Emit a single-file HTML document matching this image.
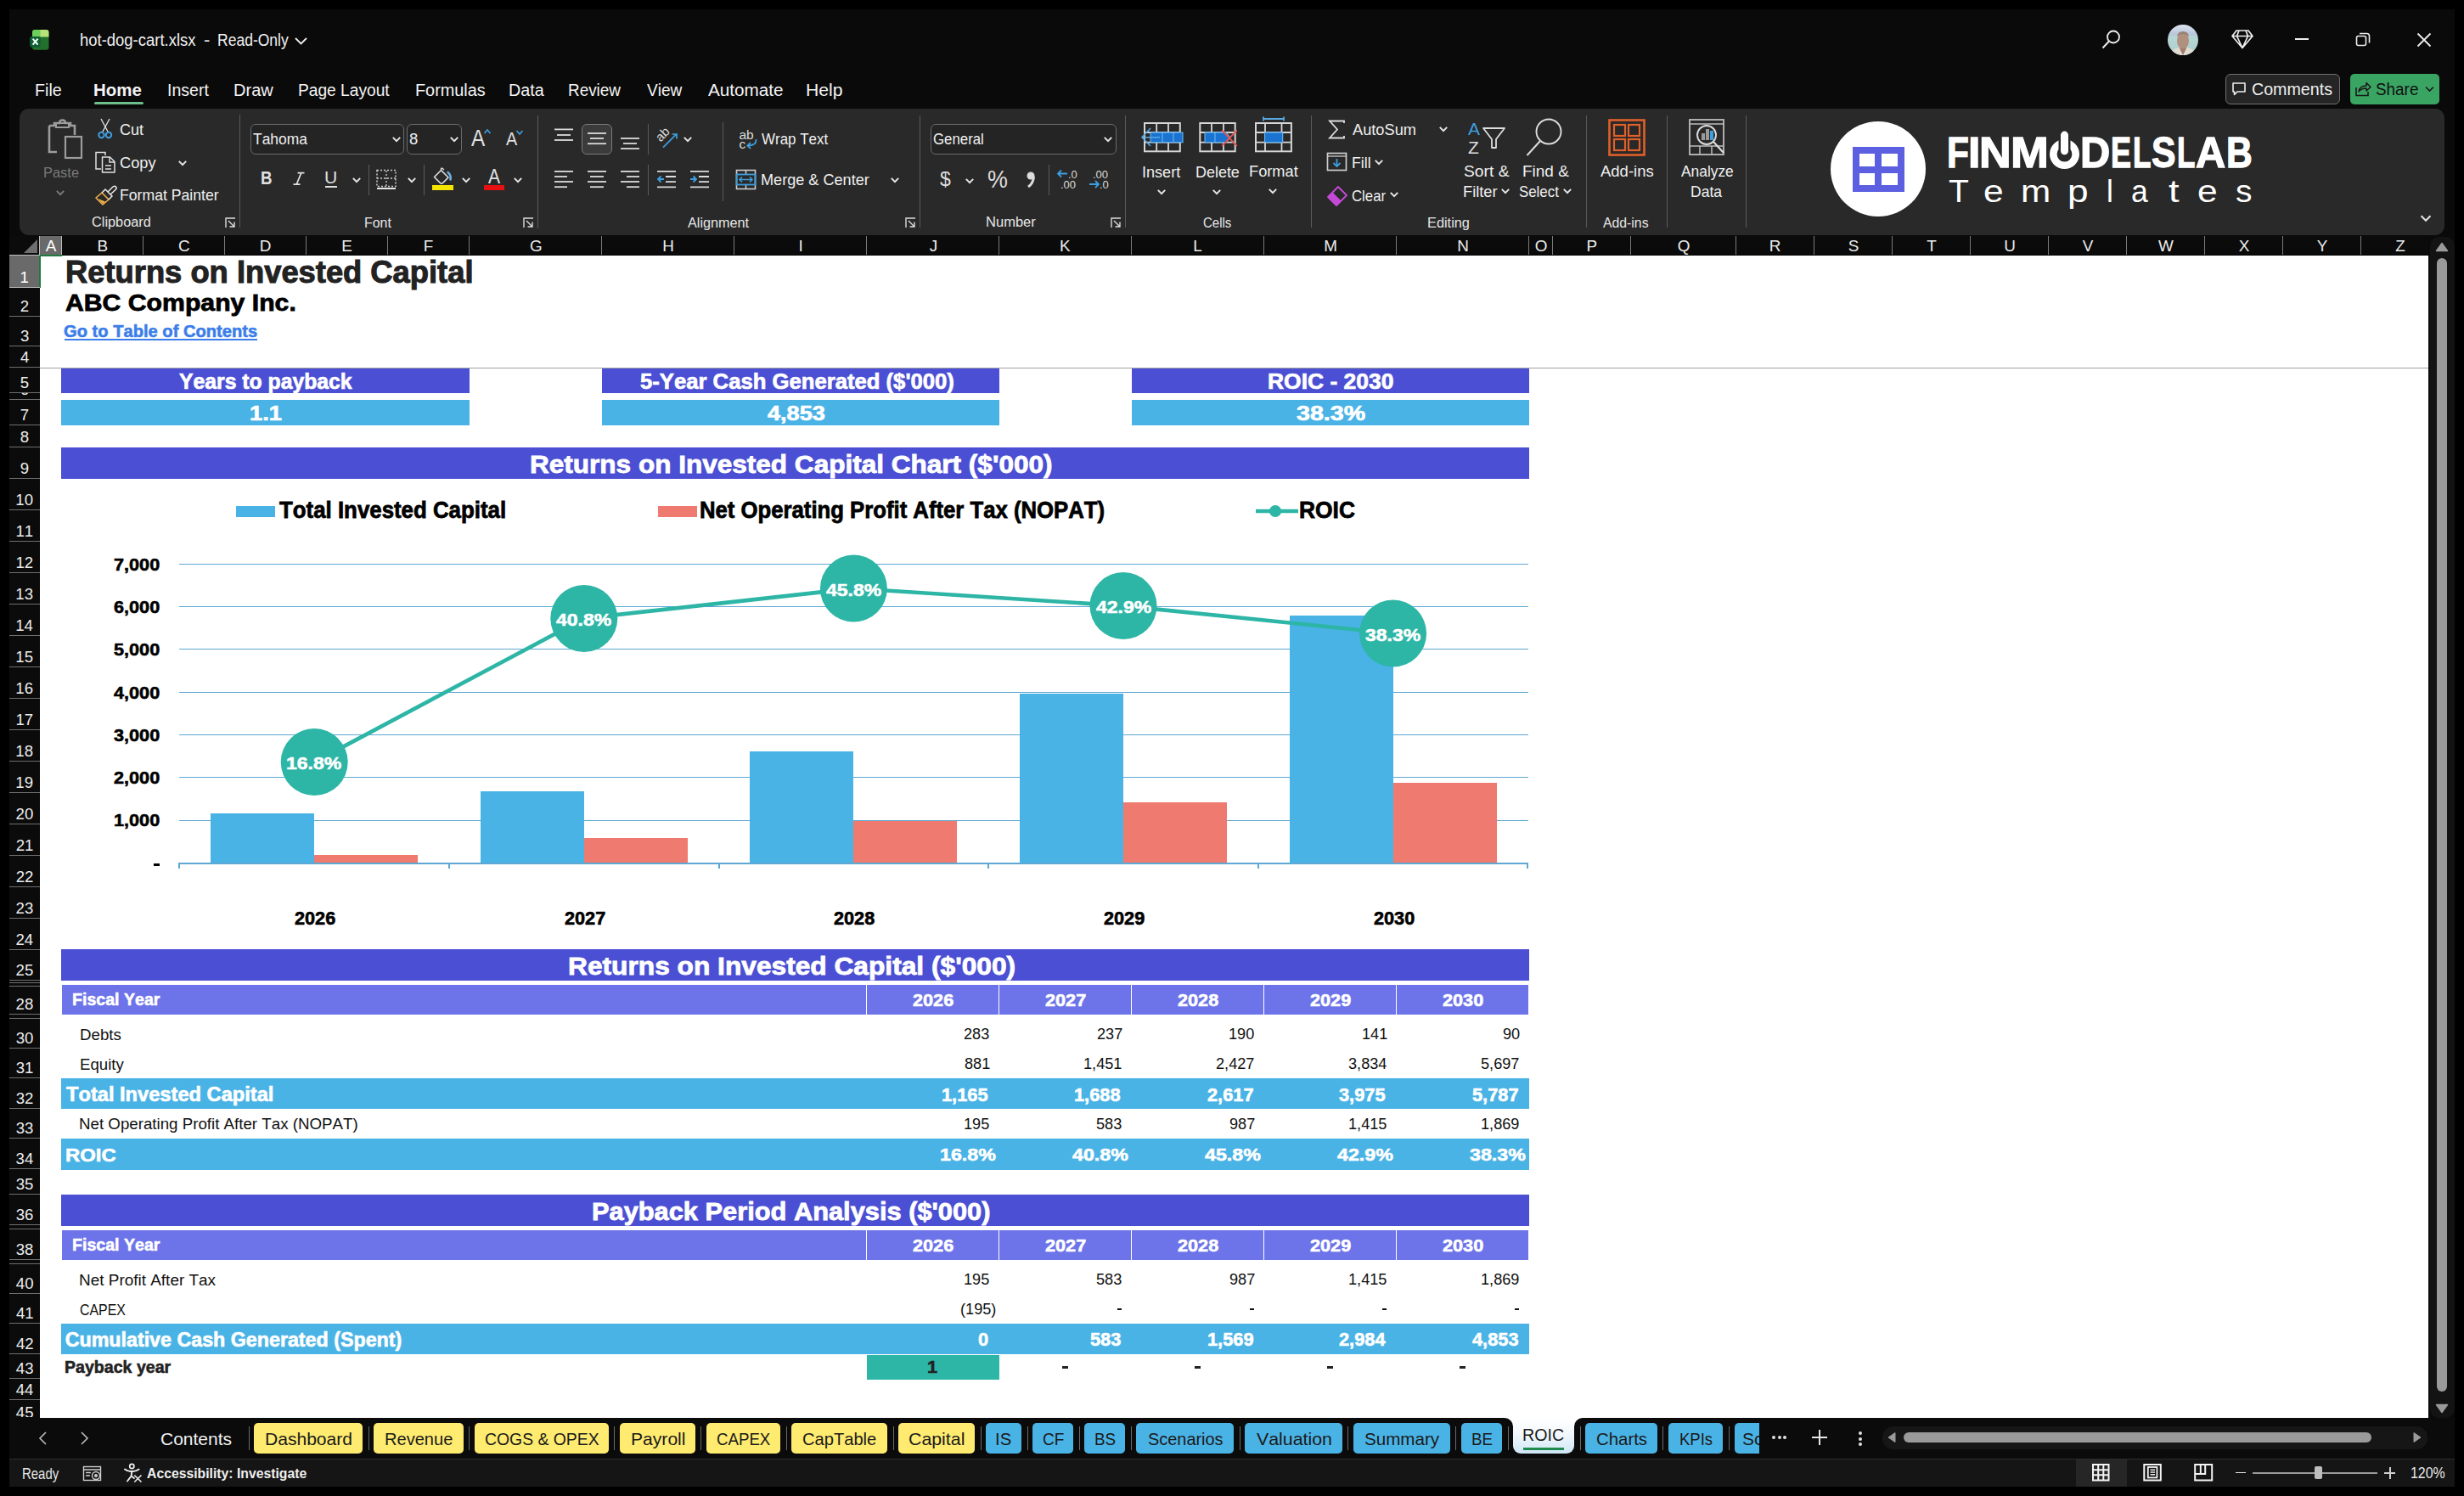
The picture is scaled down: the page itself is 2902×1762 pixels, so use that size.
<!DOCTYPE html><html><head><meta charset="utf-8"><style>
html,body{margin:0;padding:0;width:2902px;height:1762px;overflow:hidden;background:#000;}
.r{position:absolute;}
.t{position:absolute;white-space:nowrap;line-height:1;transform-origin:0 0;font-kerning:none;font-family:"Liberation Sans",sans-serif;}
svg{overflow:visible}
</style></head><body>
<div class="r" style="left:11px;top:11px;width:2880px;height:1740px;background:#0a0a0a;"></div>
<svg class="r" style="left:34px;top:34px;" width="26" height="26" viewBox="0 0 26 26"><defs><clipPath id="xl"><rect x="4" y="1" width="19.5" height="23.8" rx="3"/></clipPath></defs><g clip-path="url(#xl)"><rect x="4" y="1" width="20" height="24" fill="#22702b"/><rect x="4" y="1" width="9.2" height="8.5" fill="#6ccf5b"/><rect x="13.2" y="1" width="11" height="8.5" fill="#b8e57a"/></g><rect x="1.2" y="8.9" width="12.5" height="12.8" rx="2" fill="#0f5e36"/><path d="M4.6 11.6 L10.6 18.6 M10.6 11.6 L4.6 18.6" stroke="#f2fff4" stroke-width="2.1"/></svg>
<div class="t" style="left:93.72px;top:38.29px;font-size:19.77px;font-weight:400;color:#f2f2f2;transform:scaleX(0.9341);">hot-dog-cart.xlsx</div>
<div class="t" style="left:240.02px;top:38.29px;font-size:19.77px;font-weight:400;color:#f2f2f2;transform:scaleX(1.1189);">-</div>
<div class="t" style="left:255.96px;top:38.29px;font-size:19.77px;font-weight:400;color:#f2f2f2;transform:scaleX(0.8866);">Read-Only</div>
<svg class="r" style="left:346px;top:42px;" width="18" height="12" viewBox="0 0 18 12"><path d="M2 3 L8.5 9.5 L15 3" stroke="#eee" stroke-width="1.8" fill="none"/></svg>
<svg class="r" style="left:2474px;top:34px;" width="26" height="26" viewBox="0 0 26 26"><circle cx="15" cy="9.5" r="7" stroke="#eee" stroke-width="1.8" fill="none"/><path d="M10 14.5 L2.5 22.5" stroke="#eee" stroke-width="1.9"/></svg>
<svg class="r" style="left:2553px;top:29px;" width="36" height="36" viewBox="0 0 36 36"><defs><clipPath id="av"><circle cx="18" cy="18" r="18"/></clipPath><linearGradient id="avg" x1="0" y1="0" x2="0" y2="1"><stop offset="0" stop-color="#dfe4f0"/><stop offset="0.3" stop-color="#b9c6dc"/><stop offset="0.42" stop-color="#b7d6d6"/><stop offset="1" stop-color="#a9cfcc"/></linearGradient></defs><g clip-path="url(#av)"><rect width="36" height="36" fill="url(#avg)"/><ellipse cx="18" cy="19" rx="7" ry="10" fill="#b0907f"/><path d="M11 14 Q11.5 8 18 8 Q24.5 8 25 14 Q22 11 18 11 Q14 11 11 14Z" fill="#9a8276"/><path d="M3 36 Q5 28 13 27 L18 30 L23 27 Q31 28 33 36Z" fill="#e2dbd2"/><path d="M13.5 27 L18 36 L22.5 27 Q18 29.5 13.5 27Z" fill="#a07c6c"/></g></svg>
<svg class="r" style="left:2627px;top:33px;" width="28" height="26" viewBox="0 0 28 26"><path d="M7 3 H21 L26 9.5 L14 23.5 L2 9.5 Z M2 9.5 H26 M10 3 L7.5 9.5 L14 23.5 L20.5 9.5 L18 3" stroke="#eee" stroke-width="1.7" fill="none" stroke-linejoin="round"/></svg>
<div class="r" style="left:2703px;top:45px;width:16px;height:2px;background:#eee;"></div>
<svg class="r" style="left:2773px;top:37px;" width="20" height="20" viewBox="0 0 20 20"><rect x="2.5" y="5.5" width="11" height="11" rx="2" stroke="#eee" stroke-width="1.6" fill="none"/><path d="M6 2.5 H14.5 Q17.5 2.5 17.5 5.5 V13.5" stroke="#eee" stroke-width="1.6" fill="none"/></svg>
<svg class="r" style="left:2845px;top:37px;" width="20" height="20" viewBox="0 0 20 20"><path d="M2.5 2.5 L17.5 17.5 M17.5 2.5 L2.5 17.5" stroke="#eee" stroke-width="1.8"/></svg>
<div class="r" style="left:2621px;top:87px;width:133px;height:34px;border:1px solid #707070;border-radius:6px;background:#252525"></div>
<svg class="r" style="left:2628px;top:96px;" width="18" height="18" viewBox="0 0 18 18"><path d="M2 2 H16 V12 H7 L3.5 15.5 V12 H2 Z" stroke="#eee" stroke-width="1.6" fill="none" stroke-linejoin="round"/></svg>
<div class="t" style="left:2651.70px;top:96.37px;font-size:19.91px;font-weight:400;color:#f0f0f0;transform:scaleX(0.9869);">Comments</div>
<div class="r" style="left:2768px;top:87px;width:105px;height:36px;border-radius:5px;background:#3aa563"></div>
<svg class="r" style="left:2773px;top:95px;" width="20" height="20" viewBox="0 0 20 20"><path d="M2 8 V17.5 H16 V13" stroke="#1a1a1a" stroke-width="1.6" fill="none"/><path d="M5 13 Q6 6 14 6 V2.5 L19 7.5 L14 12 V9 Q8 9 5 13 Z" stroke="#1a1a1a" stroke-width="1.5" fill="none" stroke-linejoin="round"/></svg>
<div class="t" style="left:2798.14px;top:96.37px;font-size:19.91px;font-weight:400;color:#111;transform:scaleX(0.9484);">Share</div>
<svg class="r" style="left:2855px;top:100px;" width="14" height="10" viewBox="0 0 14 10"><path d="M2 2.5 L6.5 7 L11 2.5" stroke="#1a1a1a" stroke-width="1.6" fill="none"/></svg>
<div class="t" style="left:41.19px;top:97.17px;font-size:19.91px;font-weight:400;color:#f4f4f4;transform:scaleX(0.9876);">File</div>
<div class="t" style="left:110.23px;top:97.17px;font-size:19.91px;font-weight:700;color:#f4f4f4;transform:scaleX(1.0279);">Home</div>
<div class="t" style="left:196.80px;top:97.17px;font-size:19.91px;font-weight:400;color:#f4f4f4;transform:scaleX(0.9808);">Insert</div>
<div class="t" style="left:275.35px;top:97.17px;font-size:19.91px;font-weight:400;color:#f4f4f4;transform:scaleX(1.0071);">Draw</div>
<div class="t" style="left:351.43px;top:97.17px;font-size:19.91px;font-weight:400;color:#f4f4f4;transform:scaleX(0.9632);">Page Layout</div>
<div class="t" style="left:488.97px;top:97.17px;font-size:19.91px;font-weight:400;color:#f4f4f4;transform:scaleX(0.9971);">Formulas</div>
<div class="t" style="left:599.38px;top:97.17px;font-size:19.91px;font-weight:400;color:#f4f4f4;transform:scaleX(0.9894);">Data</div>
<div class="t" style="left:669.45px;top:97.17px;font-size:19.91px;font-weight:400;color:#f4f4f4;transform:scaleX(0.9497);">Review</div>
<div class="t" style="left:761.92px;top:97.17px;font-size:19.91px;font-weight:400;color:#f4f4f4;transform:scaleX(0.9578);">View</div>
<div class="t" style="left:833.66px;top:97.17px;font-size:19.91px;font-weight:400;color:#f4f4f4;transform:scaleX(1.0402);">Automate</div>
<div class="t" style="left:948.86px;top:97.17px;font-size:19.91px;font-weight:400;color:#f4f4f4;transform:scaleX(1.0628);">Help</div>
<div class="r" style="left:111px;top:120px;width:58px;height:3px;border-radius:2px;background:#6cbf8a"></div>
<div class="r" style="left:23px;top:128px;width:2856px;height:149px;border-radius:11px;background:#292929"></div>
<svg class="r" style="left:54px;top:140px;" width="44" height="48" viewBox="0 0 44 48"><path d="M4 8 H10 V5 H16 Q16 1.5 19.5 1.5 Q23 1.5 23 5 H29 V8 H34 V19" stroke="#9c9c9c" stroke-width="2.6" fill="none"/><path d="M4 8 V39 H13" stroke="#9c9c9c" stroke-width="2.6" fill="none"/><rect x="12" y="5" width="15" height="5" fill="none" stroke="#9c9c9c" stroke-width="2"/><rect x="23" y="21" width="19" height="25" fill="none" stroke="#9c9c9c" stroke-width="2.2"/></svg>
<div class="t" style="left:50.65px;top:195.84px;font-size:16.72px;font-weight:400;color:#7a7a7a;transform:scaleX(0.9845);">Paste</div>
<svg class="r" style="left:64px;top:222px;" width="14" height="10" viewBox="0 0 14 10"><path d="M2.8 2.9 L7 7.1 L11.2 2.9" stroke="#7a7a7a" stroke-width="2.0" fill="none"/></svg>
<svg class="r" style="left:114px;top:139px;" width="20" height="26" viewBox="0 0 20 26"><path d="M5 1 L13 16 M15 1 L7 16" stroke="#e8e8e8" stroke-width="1.3" fill="none"/><circle cx="5.5" cy="20" r="3.2" stroke="#3f9ede" stroke-width="2" fill="none"/><circle cx="14" cy="20" r="3.2" stroke="#3f9ede" stroke-width="2" fill="none"/></svg>
<div class="t" style="left:141.08px;top:144.03px;font-size:18.17px;font-weight:400;color:#f0f0f0;transform:scaleX(0.9920);">Cut</div>
<svg class="r" style="left:111px;top:178px;" width="27" height="27" viewBox="0 0 27 27"><path d="M13 5 V1.5 H2 V21 H8" stroke="#e0e0e0" stroke-width="1.5" fill="none"/><path d="M9.5 7 H18.5 L24 12.5 V25 H9.5 Z" stroke="#e0e0e0" stroke-width="1.5" fill="none" stroke-linejoin="round"/><path d="M18 7 V13 H24" stroke="#e0e0e0" stroke-width="1.4" fill="none"/><path d="M13 17 H20 M13 21 H20" stroke="#e0e0e0" stroke-width="1.4"/></svg>
<div class="t" style="left:141.07px;top:182.63px;font-size:18.17px;font-weight:400;color:#f0f0f0;transform:scaleX(1.0059);">Copy</div>
<svg class="r" style="left:208px;top:186.6px;" width="14" height="10" viewBox="0 0 14 10"><path d="M2.8 2.9 L7 7.1 L11.2 2.9" stroke="#e6e6e6" stroke-width="2.0" fill="none"/></svg>
<svg class="r" style="left:111px;top:217px;" width="27" height="26" viewBox="0 0 27 26"><path d="M2 16 L9 10 L17 18 L10 24 Z" stroke="#f0b24b" stroke-width="1.6" fill="none" stroke-linejoin="round"/><path d="M4.5 17 L10 23 L13 20.5 Z" fill="#f0b24b"/><path d="M9 10 L13 6 L21 14 L17 18" stroke="#e8e8e8" stroke-width="1.5" fill="none"/><path d="M16 9 L22 3 Q24 1.5 25.5 3 Q27 4.5 25 6.5 L19 12" stroke="#e8e8e8" stroke-width="1.5" fill="none"/></svg>
<div class="t" style="left:140.55px;top:221.33px;font-size:18.17px;font-weight:400;color:#f0f0f0;transform:scaleX(0.9716);">Format Painter</div>
<div class="t" style="left:108.17px;top:254.47px;font-size:15.84px;font-weight:400;color:#e6e6e6;transform:scaleX(1.0305);">Clipboard</div>
<svg class="r" style="left:265px;top:256px;" width="13" height="13" viewBox="0 0 13 13"><path d="M1 12 V1 H12" stroke="#ddd" stroke-width="1.4" fill="none"/><path d="M4 4 L11 11 M11 5.5 V11 H5.5" stroke="#ddd" stroke-width="1.4" fill="none"/></svg>
<div class="r" style="left:282px;top:135px;width:1px;height:133px;background:#5a5a5a;"></div>
<div class="r" style="left:295px;top:146px;width:179px;height:34px;border:1px solid #6a6a6a;border-radius:6px;background:#242424"></div>
<div class="t" style="left:297.91px;top:155.12px;font-size:18.90px;font-weight:400;color:#f0f0f0;transform:scaleX(0.9217);">Tahoma</div>
<svg class="r" style="left:460px;top:159px;" width="14" height="10" viewBox="0 0 14 10"><path d="M2.8 2.9 L7 7.1 L11.2 2.9" stroke="#e6e6e6" stroke-width="2.0" fill="none"/></svg>
<div class="r" style="left:479px;top:146px;width:63px;height:34px;border:1px solid #6a6a6a;border-radius:6px;background:#242424"></div>
<div class="t" style="left:481.59px;top:155.35px;font-size:18.62px;font-weight:400;color:#f0f0f0;transform:scaleX(0.9955);">8</div>
<svg class="r" style="left:528px;top:159px;" width="14" height="10" viewBox="0 0 14 10"><path d="M2.8 2.9 L7 7.1 L11.2 2.9" stroke="#e6e6e6" stroke-width="2.0" fill="none"/></svg>
<div class="t" style="left:554.65px;top:148.54px;font-size:27.62px;font-weight:400;color:#e0e0e0;transform:scaleX(0.8792);">A</div>
<svg class="r" style="left:569px;top:151px;" width="10" height="8" viewBox="0 0 10 8"><path d="M1.5 6 L5 2 L8.5 6" stroke="#3f9ede" stroke-width="1.7" fill="none"/></svg>
<div class="t" style="left:595.56px;top:153.03px;font-size:22.24px;font-weight:400;color:#e0e0e0;transform:scaleX(0.8884);">A</div>
<svg class="r" style="left:607px;top:152px;" width="10" height="8" viewBox="0 0 10 8"><path d="M1.5 2 L5 6 L8.5 2" stroke="#3f9ede" stroke-width="1.7" fill="none"/></svg>
<div class="t" style="left:306.55px;top:199.86px;font-size:21.37px;font-weight:700;color:#e0e0e0;transform:scaleX(0.8749);">B</div>
<svg class="r" style="left:344px;top:201px;" width="16" height="19" viewBox="0 0 16 19"><path d="M6.5 2.6 H14.5 M1.5 16.2 H9.5 M10.8 2.6 L5.2 16.2" stroke="#e0e0e0" stroke-width="1.7" fill="none"/></svg>
<div class="t" style="left:382.37px;top:200.12px;font-size:19.62px;font-weight:400;color:#e0e0e0;transform:scaleX(1.0769);">U</div>
<div class="r" style="left:383px;top:219px;width:14px;height:2px;background:#e0e0e0;"></div>
<svg class="r" style="left:412.5px;top:206.8px;" width="14" height="10" viewBox="0 0 14 10"><path d="M2.8 2.9 L7 7.1 L11.2 2.9" stroke="#e6e6e6" stroke-width="2.0" fill="none"/></svg>
<div class="r" style="left:434px;top:194px;width:1px;height:36px;background:#5a5a5a;"></div>
<svg class="r" style="left:442px;top:199px;" width="26" height="25" viewBox="0 0 26 25"><rect x="2" y="1.5" width="22" height="19" fill="none" stroke="#cfcfcf" stroke-width="1.5" stroke-dasharray="2 2"/><path d="M13 2 V20 M2 11 H24" stroke="#cfcfcf" stroke-width="1.3" stroke-dasharray="2 2"/><path d="M2 23 H24" stroke="#e6e6e6" stroke-width="2"/></svg>
<svg class="r" style="left:477.6px;top:206.8px;" width="14" height="10" viewBox="0 0 14 10"><path d="M2.8 2.9 L7 7.1 L11.2 2.9" stroke="#e6e6e6" stroke-width="2.0" fill="none"/></svg>
<div class="r" style="left:499px;top:194px;width:1px;height:36px;background:#5a5a5a;"></div>
<svg class="r" style="left:507px;top:197px;" width="30" height="24" viewBox="0 0 30 24"><path d="M4.5 11.5 L12.5 3.5 L21 12 L14.5 18.5 Q13 20 11.5 18.5 Z" stroke="#e0e0e0" stroke-width="1.6" fill="none" stroke-linejoin="round"/><path d="M12.5 3.5 V1.8 Q12.5 0.8 13.8 1.2 L16 3" stroke="#e0e0e0" stroke-width="1.4" fill="none"/><path d="M20.5 6 Q24.5 9 23.5 14.5" stroke="#6ab0e8" stroke-width="2.6" fill="none" stroke-linecap="round"/></svg>
<div class="r" style="left:509px;top:218px;width:25px;height:6px;background:#f5e400;"></div>
<svg class="r" style="left:541.8px;top:206.8px;" width="14" height="10" viewBox="0 0 14 10"><path d="M2.8 2.9 L7 7.1 L11.2 2.9" stroke="#e6e6e6" stroke-width="2.0" fill="none"/></svg>
<div class="t" style="left:574.96px;top:196.37px;font-size:24.71px;font-weight:400;color:#e0e0e0;transform:scaleX(0.8545);">A</div>
<div class="r" style="left:570px;top:218px;width:24px;height:6px;background:#e81010;"></div>
<svg class="r" style="left:603px;top:206.8px;" width="14" height="10" viewBox="0 0 14 10"><path d="M2.8 2.9 L7 7.1 L11.2 2.9" stroke="#e6e6e6" stroke-width="2.0" fill="none"/></svg>
<div class="t" style="left:429.19px;top:254.77px;font-size:15.84px;font-weight:400;color:#e6e6e6;transform:scaleX(1.0071);">Font</div>
<svg class="r" style="left:616px;top:256px;" width="13" height="13" viewBox="0 0 13 13"><path d="M1 12 V1 H12" stroke="#ddd" stroke-width="1.4" fill="none"/><path d="M4 4 L11 11 M11 5.5 V11 H5.5" stroke="#ddd" stroke-width="1.4" fill="none"/></svg>
<div class="r" style="left:633px;top:136px;width:1px;height:133px;background:#5a5a5a;"></div>
<svg class="r" style="left:653px;top:0px;" width="30" height="300" viewBox="0 0 30 300"><path d="M0 152.4 H22" stroke="#dcdcdc" stroke-width="1.8"/><path d="M3 159 H19" stroke="#dcdcdc" stroke-width="1.8"/><path d="M0 165 H22" stroke="#dcdcdc" stroke-width="1.8"/></svg>
<div class="r" style="left:685px;top:146px;width:34px;height:34px;border:1px solid #7a7a7a;border-radius:6px;background:#3b3b3b"></div>
<svg class="r" style="left:692px;top:0px;" width="30" height="300" viewBox="0 0 30 300"><path d="M0 157 H22" stroke="#dcdcdc" stroke-width="1.8"/><path d="M3 163 H19" stroke="#dcdcdc" stroke-width="1.8"/><path d="M0 169.2 H22" stroke="#dcdcdc" stroke-width="1.8"/></svg>
<svg class="r" style="left:731px;top:0px;" width="30" height="300" viewBox="0 0 30 300"><path d="M0 163 H22" stroke="#dcdcdc" stroke-width="1.8"/><path d="M3 169 H19" stroke="#dcdcdc" stroke-width="1.8"/><path d="M0 175 H22" stroke="#dcdcdc" stroke-width="1.8"/></svg>
<div class="r" style="left:763px;top:146px;width:1px;height:36px;background:#5a5a5a;"></div>
<svg class="r" style="left:768px;top:146px;" width="34" height="34" viewBox="0 0 34 34"><text x="13" y="13" text-anchor="middle" dominant-baseline="middle" transform="rotate(-45 13 13)" font-family="Liberation Sans" font-size="15" fill="#dcdcdc">ab</text><path d="M13 27.7 L28.5 12.2 M23.5 12 H29 V17.5" stroke="#3f9ede" stroke-width="1.7" fill="none"/></svg>
<svg class="r" style="left:803px;top:159px;" width="14" height="10" viewBox="0 0 14 10"><path d="M2.8 2.9 L7 7.1 L11.2 2.9" stroke="#e6e6e6" stroke-width="2.0" fill="none"/></svg>
<div class="r" style="left:851px;top:144px;width:1px;height:93px;background:#5a5a5a;"></div>
<svg class="r" style="left:868px;top:148px;" width="28" height="30" viewBox="0 0 28 30"><text x="2.5" y="15.5" font-family="Liberation Sans" font-size="15.5" fill="#dcdcdc">ab</text><text x="2.5" y="27" font-family="Liberation Sans" font-size="15.5" fill="#dcdcdc">c</text><path d="M22.5 16 Q23 23 14 23.5 H12.5 M16 20 L12.3 23.5 L16 27" stroke="#3f9ede" stroke-width="1.8" fill="none"/></svg>
<div class="t" style="left:896.93px;top:155.22px;font-size:18.90px;font-weight:400;color:#f0f0f0;transform:scaleX(0.8974);">Wrap Text</div>
<svg class="r" style="left:653px;top:0px;" width="30" height="300" viewBox="0 0 30 300"><path d="M0 201.9 H22" stroke="#dcdcdc" stroke-width="1.8"/><path d="M0 208 H15" stroke="#dcdcdc" stroke-width="1.8"/><path d="M0 214 H22" stroke="#dcdcdc" stroke-width="1.8"/><path d="M0 220.2 H15" stroke="#dcdcdc" stroke-width="1.8"/></svg>
<svg class="r" style="left:692px;top:0px;" width="30" height="300" viewBox="0 0 30 300"><path d="M0 201.9 H22" stroke="#dcdcdc" stroke-width="1.8"/><path d="M3 208 H19" stroke="#dcdcdc" stroke-width="1.8"/><path d="M0 214 H22" stroke="#dcdcdc" stroke-width="1.8"/><path d="M3 220.2 H19" stroke="#dcdcdc" stroke-width="1.8"/></svg>
<svg class="r" style="left:731px;top:0px;" width="30" height="300" viewBox="0 0 30 300"><path d="M0 201.9 H22" stroke="#dcdcdc" stroke-width="1.8"/><path d="M7 208 H22" stroke="#dcdcdc" stroke-width="1.8"/><path d="M0 214 H22" stroke="#dcdcdc" stroke-width="1.8"/><path d="M7 220.2 H22" stroke="#dcdcdc" stroke-width="1.8"/></svg>
<div class="r" style="left:763px;top:194px;width:1px;height:36px;background:#5a5a5a;"></div>
<svg class="r" style="left:772px;top:198px;" width="26" height="26" viewBox="0 0 26 26"><path d="M2 3.9 H24 M12 10 H24 M12 16.2 H24 M2 22.3 H24" stroke="#dcdcdc" stroke-width="1.8"/><path d="M10 13 H3 M6.5 9.5 L3 13 L6.5 16.5" stroke="#3f9ede" stroke-width="1.8" fill="none"/></svg>
<svg class="r" style="left:811px;top:198px;" width="26" height="26" viewBox="0 0 26 26"><path d="M2 3.9 H24 M12 10 H24 M12 16.2 H24 M2 22.3 H24" stroke="#dcdcdc" stroke-width="1.8"/><path d="M2 13 H9 M5.5 9.5 L9 13 L5.5 16.5" stroke="#3f9ede" stroke-width="1.8" fill="none"/></svg>
<svg class="r" style="left:866px;top:199px;" width="26" height="26" viewBox="0 0 26 26"><rect x="1.5" y="1.5" width="22" height="22" fill="none" stroke="#cfcfcf" stroke-width="1.6"/><path d="M12.5 1.5 V6 M12.5 19 V23.5" stroke="#cfcfcf" stroke-width="1.5"/><rect x="1.5" y="6.5" width="22" height="12" fill="none" stroke="#3f9ede" stroke-width="1.8"/><path d="M5 12.5 H20 M8 9.5 L5 12.5 L8 15.5 M17 9.5 L20 12.5 L17 15.5" stroke="#3f9ede" stroke-width="1.6" fill="none"/></svg>
<div class="t" style="left:895.51px;top:202.92px;font-size:18.90px;font-weight:400;color:#f0f0f0;transform:scaleX(0.9581);">Merge &amp; Center</div>
<svg class="r" style="left:1046.7px;top:207px;" width="14" height="10" viewBox="0 0 14 10"><path d="M2.8 2.9 L7 7.1 L11.2 2.9" stroke="#e6e6e6" stroke-width="2.0" fill="none"/></svg>
<div class="t" style="left:809.97px;top:254.77px;font-size:15.84px;font-weight:400;color:#e6e6e6;transform:scaleX(1.0241);">Alignment</div>
<svg class="r" style="left:1066px;top:256px;" width="13" height="13" viewBox="0 0 13 13"><path d="M1 12 V1 H12" stroke="#ddd" stroke-width="1.4" fill="none"/><path d="M4 4 L11 11 M11 5.5 V11 H5.5" stroke="#ddd" stroke-width="1.4" fill="none"/></svg>
<div class="r" style="left:1083px;top:136px;width:1px;height:132px;background:#5a5a5a;"></div>
<div class="r" style="left:1096px;top:146px;width:217px;height:34px;border:1px solid #6a6a6a;border-radius:6px;background:#242424"></div>
<div class="t" style="left:1098.65px;top:155.22px;font-size:18.90px;font-weight:400;color:#f0f0f0;transform:scaleX(0.8907);">General</div>
<svg class="r" style="left:1298px;top:159px;" width="14" height="10" viewBox="0 0 14 10"><path d="M2.8 2.9 L7 7.1 L11.2 2.9" stroke="#e6e6e6" stroke-width="2.0" fill="none"/></svg>
<div class="t" style="left:1106.55px;top:199.58px;font-size:23.26px;font-weight:400;color:#dcdcdc;transform:scaleX(0.9911);">$</div>
<svg class="r" style="left:1135px;top:207.5px;" width="14" height="10" viewBox="0 0 14 10"><path d="M2.8 2.9 L7 7.1 L11.2 2.9" stroke="#e6e6e6" stroke-width="2.0" fill="none"/></svg>
<div class="t" style="left:1163.04px;top:197.23px;font-size:29.07px;font-weight:400;color:#dcdcdc;transform:scaleX(0.9253);">%</div>
<svg class="r" style="left:1206px;top:201px;" width="16" height="22" viewBox="0 0 16 22"><circle cx="8" cy="6" r="4.5" fill="#dcdcdc"/><path d="M11.5 7 Q11 15 5 19" stroke="#dcdcdc" stroke-width="3" fill="none"/></svg>
<div class="r" style="left:1235px;top:194px;width:1px;height:36px;background:#5a5a5a;"></div>
<svg class="r" style="left:1243px;top:198px;" width="28" height="26" viewBox="0 0 28 26"><path d="M14 6.5 H3 M7 2.5 L3 6.5 L7 10.5" stroke="#3f9ede" stroke-width="1.8" fill="none"/><text x="15" y="12" font-family="Liberation Sans" font-size="13" fill="#dcdcdc">.0</text><text x="6" y="24" font-family="Liberation Sans" font-size="13" fill="#dcdcdc">.00</text></svg>
<svg class="r" style="left:1281px;top:198px;" width="28" height="26" viewBox="0 0 28 26"><text x="6" y="12" font-family="Liberation Sans" font-size="13" fill="#dcdcdc">.00</text><path d="M2 19 H13 M9 15 L13 19 L9 23" stroke="#3f9ede" stroke-width="1.8" fill="none"/><text x="14" y="24" font-family="Liberation Sans" font-size="13" fill="#dcdcdc">.0</text></svg>
<div class="t" style="left:1161.44px;top:254.07px;font-size:15.84px;font-weight:400;color:#e6e6e6;transform:scaleX(1.0441);">Number</div>
<svg class="r" style="left:1307.7px;top:256px;" width="13" height="13" viewBox="0 0 13 13"><path d="M1 12 V1 H12" stroke="#ddd" stroke-width="1.4" fill="none"/><path d="M4 4 L11 11 M11 5.5 V11 H5.5" stroke="#ddd" stroke-width="1.4" fill="none"/></svg>
<div class="r" style="left:1325px;top:136px;width:1px;height:132px;background:#5a5a5a;"></div>
<svg class="r" style="left:1340px;top:136px;" width="56" height="46" viewBox="0 0 56 46"><rect x="8" y="9" width="41.8" height="33.3" fill="none" stroke="#d6d6d6" stroke-width="2"/><path d="M22.2 9 V42.3 M36 9 V42.3 M8 20 H49.8 M8 31.7 H49.8" stroke="#d6d6d6" stroke-width="1.8"/><rect x="15" y="20" width="38" height="11.7" fill="#1a73d0" stroke="#6ab8f0" stroke-width="1.1"/><path d="M29 20 V31.7 M42 20 V31.7" stroke="#6ab8f0" stroke-width="1.1"/><path d="M5 25.8 H26 M15 15 L5 25.8 L15 36" stroke="#5aa8e0" stroke-width="1.6" fill="none"/></svg>
<div class="t" style="left:1345.33px;top:194.43px;font-size:18.17px;font-weight:400;color:#f0f0f0;transform:scaleX(0.9947);">Insert</div>
<svg class="r" style="left:1361px;top:221px;" width="14" height="10" viewBox="0 0 14 10"><path d="M2.8 2.9 L7 7.1 L11.2 2.9" stroke="#e6e6e6" stroke-width="2.0" fill="none"/></svg>
<svg class="r" style="left:1405px;top:136px;" width="56" height="46" viewBox="0 0 56 46"><rect x="8.3" y="9" width="41.400000000000006" height="33.3" fill="none" stroke="#d6d6d6" stroke-width="2"/><path d="M22 9 V42.3 M36 9 V42.3 M8.3 20 H49.7 M8.3 31.7 H49.7" stroke="#d6d6d6" stroke-width="1.8"/><path d="M14 20 H38.8 L44 25.8 L38.8 31.7 H14 Z" fill="#1a73d0" stroke="#6ab8f0" stroke-width="1.1"/><path d="M26 20 V31.7" stroke="#6ab8f0" stroke-width="1.1"/><path d="M34.3 17.5 L51.8 35.8 M51.8 17.5 L34.3 35.8" stroke="#e05555" stroke-width="1.9"/></svg>
<div class="t" style="left:1407.53px;top:194.43px;font-size:18.17px;font-weight:400;color:#f0f0f0;transform:scaleX(0.9876);">Delete</div>
<svg class="r" style="left:1426px;top:221px;" width="14" height="10" viewBox="0 0 14 10"><path d="M2.8 2.9 L7 7.1 L11.2 2.9" stroke="#e6e6e6" stroke-width="2.0" fill="none"/></svg>
<svg class="r" style="left:1475px;top:136px;" width="50" height="46" viewBox="0 0 50 46"><rect x="4" y="9" width="41.9" height="33.3" fill="none" stroke="#d6d6d6" stroke-width="2"/><path d="M15 9 V42.3 M34.5 9 V42.3 M4 20 H45.9 M4 31.7 H45.9" stroke="#d6d6d6" stroke-width="1.8"/><rect x="14.6" y="20" width="21.1" height="11.7" fill="#1a73d0" stroke="#6ab8f0" stroke-width="1.1"/><path d="M13 4 H37 M13 1.5 V6.5 M37 1.5 V6.5" stroke="#5aa8e0" stroke-width="1.8"/></svg>
<div class="t" style="left:1471.00px;top:192.83px;font-size:18.17px;font-weight:400;color:#f0f0f0;transform:scaleX(1.0051);">Format</div>
<svg class="r" style="left:1491.8px;top:219.7px;" width="14" height="10" viewBox="0 0 14 10"><path d="M2.8 2.9 L7 7.1 L11.2 2.9" stroke="#e6e6e6" stroke-width="2.0" fill="none"/></svg>
<div class="t" style="left:1417.24px;top:255.27px;font-size:15.84px;font-weight:400;color:#e6e6e6;transform:scaleX(0.9457);">Cells</div>
<div class="r" style="left:1544px;top:136px;width:1px;height:132px;background:#5a5a5a;"></div>
<svg class="r" style="left:1564px;top:141px;" width="22" height="23" viewBox="0 0 22 23"><path d="M19 4 V1.5 H2 L11 11.5 L2 21.5 H19 V19" stroke="#dcdcdc" stroke-width="1.8" fill="none"/></svg>
<div class="t" style="left:1592.96px;top:143.83px;font-size:18.17px;font-weight:400;color:#f0f0f0;transform:scaleX(1.0041);">AutoSum</div>
<svg class="r" style="left:1692.5px;top:146.7px;" width="14" height="10" viewBox="0 0 14 10"><path d="M2.8 2.9 L7 7.1 L11.2 2.9" stroke="#e6e6e6" stroke-width="2.0" fill="none"/></svg>
<svg class="r" style="left:1562px;top:179px;" width="26" height="24" viewBox="0 0 26 24"><rect x="1.5" y="1.5" width="22" height="20" fill="none" stroke="#cfcfcf" stroke-width="1.7"/><path d="M1.5 5 H23.5" stroke="#cfcfcf" stroke-width="1.3"/><path d="M12.5 8 V17 M8.5 13 L12.5 17 L16.5 13" stroke="#3f9ede" stroke-width="1.8" fill="none"/></svg>
<div class="t" style="left:1591.55px;top:182.73px;font-size:18.17px;font-weight:400;color:#f0f0f0;transform:scaleX(0.9755);">Fill</div>
<svg class="r" style="left:1617px;top:185.6px;" width="14" height="10" viewBox="0 0 14 10"><path d="M2.8 2.9 L7 7.1 L11.2 2.9" stroke="#e6e6e6" stroke-width="2.0" fill="none"/></svg>
<svg class="r" style="left:1562px;top:217px;" width="26" height="25" viewBox="0 0 26 25"><path d="M2 15 L14 3 L24 13 L12 25 Z" stroke="#c44ad6" stroke-width="1.8" fill="none" stroke-linejoin="round"/><path d="M2 15 L7.5 9.5 L17.5 19.5 L12 25 Z" fill="#c44ad6"/></svg>
<div class="t" style="left:1592.15px;top:221.73px;font-size:18.17px;font-weight:400;color:#f0f0f0;transform:scaleX(0.9243);">Clear</div>
<svg class="r" style="left:1635px;top:224px;" width="14" height="10" viewBox="0 0 14 10"><path d="M2.8 2.9 L7 7.1 L11.2 2.9" stroke="#e6e6e6" stroke-width="2.0" fill="none"/></svg>
<svg class="r" style="left:1728px;top:140px;" width="48" height="44" viewBox="0 0 48 44"><text x="1" y="19" font-family="Liberation Sans" font-size="21" fill="#3f9ede">A</text><text x="1" y="41" font-family="Liberation Sans" font-size="21" fill="#dcdcdc">Z</text><path d="M19 11 H44 L34 24 V34 H29 V24 Z" stroke="#dcdcdc" stroke-width="1.8" fill="none" stroke-linejoin="round"/></svg>
<div class="t" style="left:1724.12px;top:192.53px;font-size:18.17px;font-weight:400;color:#f0f0f0;transform:scaleX(1.0612);">Sort &amp;</div>
<div class="t" style="left:1722.50px;top:216.83px;font-size:18.17px;font-weight:400;color:#f0f0f0;transform:scaleX(1.0057);">Filter</div>
<svg class="r" style="left:1765.5px;top:219.7px;" width="14" height="10" viewBox="0 0 14 10"><path d="M2.8 2.9 L7 7.1 L11.2 2.9" stroke="#e6e6e6" stroke-width="2.0" fill="none"/></svg>
<svg class="r" style="left:1796px;top:139px;" width="48" height="48" viewBox="0 0 48 48"><circle cx="28" cy="16" r="14.5" stroke="#dcdcdc" stroke-width="1.9" fill="none"/><path d="M18 27 L2.5 44" stroke="#dcdcdc" stroke-width="2"/></svg>
<div class="t" style="left:1793.44px;top:192.53px;font-size:18.17px;font-weight:400;color:#f0f0f0;transform:scaleX(1.0446);">Find &amp;</div>
<div class="t" style="left:1789.23px;top:216.83px;font-size:18.17px;font-weight:400;color:#f0f0f0;transform:scaleX(0.9286);">Select</div>
<svg class="r" style="left:1839px;top:219.7px;" width="14" height="10" viewBox="0 0 14 10"><path d="M2.8 2.9 L7 7.1 L11.2 2.9" stroke="#e6e6e6" stroke-width="2.0" fill="none"/></svg>
<div class="t" style="left:1681.06px;top:255.27px;font-size:15.84px;font-weight:400;color:#e6e6e6;transform:scaleX(1.0321);">Editing</div>
<div class="r" style="left:1868px;top:136px;width:1px;height:132px;background:#5a5a5a;"></div>
<svg class="r" style="left:1893px;top:139px;" width="46" height="46" viewBox="0 0 46 46"><rect x="2.5" y="2.5" width="41" height="41" fill="none" stroke="#e0602a" stroke-width="2.6"/><rect x="8" y="8" width="13" height="13" fill="none" stroke="#e0602a" stroke-width="2.2"/><rect x="25" y="8" width="13" height="13" fill="none" stroke="#e0602a" stroke-width="2.2"/><rect x="8" y="25" width="13" height="13" fill="none" stroke="#e0602a" stroke-width="2.2"/><rect x="25" y="25" width="13" height="13" fill="none" stroke="#e0602a" stroke-width="2.2"/></svg>
<div class="t" style="left:1884.96px;top:192.53px;font-size:18.17px;font-weight:400;color:#f0f0f0;transform:scaleX(1.0179);">Add-ins</div>
<div class="t" style="left:1887.97px;top:255.27px;font-size:15.84px;font-weight:400;color:#e6e6e6;transform:scaleX(0.9978);">Add-ins</div>
<div class="r" style="left:1963px;top:136px;width:1px;height:132px;background:#5a5a5a;"></div>
<svg class="r" style="left:1988px;top:139px;" width="46" height="46" viewBox="0 0 46 46"><rect x="2" y="2" width="40" height="41" fill="none" stroke="#bdbdbd" stroke-width="1.8"/><path d="M2 7 H42 M2 33 H42 M14 33 V43 M28 33 V43" stroke="#bdbdbd" stroke-width="1.5"/><circle cx="22" cy="20" r="11" fill="#292929" stroke="#dcdcdc" stroke-width="1.9"/><path d="M30 28 L42 41" stroke="#dcdcdc" stroke-width="2.2"/><rect x="16" y="18" width="4" height="8" fill="#9a9a9a"/><rect x="21" y="13" width="4" height="13" fill="#9a9a9a"/><rect x="26" y="15" width="4" height="11" fill="#3f9ede"/></svg>
<div class="t" style="left:1979.97px;top:192.53px;font-size:18.17px;font-weight:400;color:#f0f0f0;transform:scaleX(0.9562);">Analyze</div>
<div class="t" style="left:1990.96px;top:216.83px;font-size:18.17px;font-weight:400;color:#f0f0f0;transform:scaleX(0.9651);">Data</div>
<div class="r" style="left:2056px;top:136px;width:1px;height:132px;background:#5a5a5a;"></div>
<div class="r" style="left:2156px;top:143px;width:112px;height:112px;border-radius:50%;background:#fff"></div>
<div class="r" style="left:2182px;top:173px;width:61px;height:53px;background:#5b5fe0;"></div>
<div class="r" style="left:2190px;top:181px;width:18px;height:15px;background:#fff;"></div>
<div class="r" style="left:2216px;top:181px;width:19px;height:15px;background:#fff;"></div>
<div class="r" style="left:2190px;top:204px;width:18px;height:14px;background:#fff;"></div>
<div class="r" style="left:2216px;top:204px;width:19px;height:14px;background:#fff;"></div>
<div class="t" style="left:2292.77px;top:155.31px;font-size:50.29px;font-weight:700;color:#fff;transform:scaleX(0.8427);-webkit-text-stroke:1.3px #fff;">F</div>
<div class="t" style="left:2318.12px;top:155.31px;font-size:50.29px;font-weight:700;color:#fff;transform:scaleX(1.0353);-webkit-text-stroke:1.3px #fff;">I</div>
<div class="t" style="left:2331.11px;top:155.31px;font-size:50.29px;font-weight:700;color:#fff;transform:scaleX(1.0384);-webkit-text-stroke:1.3px #fff;">N</div>
<div class="t" style="left:2367.99px;top:155.31px;font-size:50.29px;font-weight:700;color:#fff;transform:scaleX(1.0721);-webkit-text-stroke:1.3px #fff;">M</div>
<div class="t" style="left:2450.33px;top:155.31px;font-size:50.29px;font-weight:700;color:#fff;transform:scaleX(0.9727);-webkit-text-stroke:1.3px #fff;">D</div>
<div class="t" style="left:2485.99px;top:155.31px;font-size:50.29px;font-weight:700;color:#fff;transform:scaleX(0.7159);-webkit-text-stroke:1.3px #fff;">E</div>
<div class="t" style="left:2511.95px;top:155.31px;font-size:50.29px;font-weight:700;color:#fff;transform:scaleX(0.6974);-webkit-text-stroke:1.3px #fff;">L</div>
<div class="t" style="left:2533.97px;top:155.31px;font-size:50.29px;font-weight:700;color:#fff;transform:scaleX(0.8496);-webkit-text-stroke:1.3px #fff;">S</div>
<div class="t" style="left:2563.65px;top:155.31px;font-size:50.29px;font-weight:700;color:#fff;transform:scaleX(0.6974);-webkit-text-stroke:1.3px #fff;">L</div>
<div class="t" style="left:2586.29px;top:155.31px;font-size:50.29px;font-weight:700;color:#fff;transform:scaleX(0.9692);-webkit-text-stroke:1.3px #fff;">A</div>
<div class="t" style="left:2622.15px;top:155.31px;font-size:50.29px;font-weight:700;color:#fff;transform:scaleX(0.8477);-webkit-text-stroke:1.3px #fff;">B</div>
<svg class="r" style="left:2410px;top:150px;" width="44" height="52" viewBox="0 0 44 52"><circle cx="21.5" cy="31.6" r="13.2" stroke="#fff" stroke-width="8.6" fill="none"/><rect x="14.5" y="12" width="14" height="21" fill="#292929"/><rect x="17" y="4.6" width="9" height="27.6" rx="4.5" fill="#fff"/></svg>
<div class="t" style="left:2294.52px;top:206.53px;font-size:37.21px;font-weight:400;color:#fff;transform:scaleX(1.0504);">T</div>
<div class="t" style="left:2336.19px;top:206.53px;font-size:37.21px;font-weight:400;color:#fff;transform:scaleX(1.1455);">e</div>
<div class="t" style="left:2379.89px;top:206.53px;font-size:37.21px;font-weight:400;color:#fff;transform:scaleX(1.1353);">m</div>
<div class="t" style="left:2435.45px;top:206.53px;font-size:37.21px;font-weight:400;color:#fff;transform:scaleX(1.1892);">p</div>
<div class="t" style="left:2481.42px;top:206.53px;font-size:37.21px;font-weight:400;color:#fff;transform:scaleX(0.9479);">l</div>
<div class="t" style="left:2510.39px;top:206.53px;font-size:37.21px;font-weight:400;color:#fff;transform:scaleX(0.9574);">a</div>
<div class="t" style="left:2553.61px;top:206.53px;font-size:37.21px;font-weight:400;color:#fff;transform:scaleX(1.2208);">t</div>
<div class="t" style="left:2588.19px;top:206.53px;font-size:37.21px;font-weight:400;color:#fff;transform:scaleX(1.1455);">e</div>
<div class="t" style="left:2633.11px;top:206.53px;font-size:37.21px;font-weight:400;color:#fff;transform:scaleX(1.0478);">s</div>
<svg class="r" style="left:2850px;top:252px;" width="14" height="10" viewBox="0 0 14 10"><path d="M1.5399999999999991 2.2699999999999996 L7 7.73 L12.46 2.2699999999999996" stroke="#e0e0e0" stroke-width="2.15" fill="none"/></svg>
<div class="r" style="left:47px;top:301px;width:2815px;height:1369px;background:#ffffff;"></div>
<div class="r" style="left:11px;top:278px;width:2851px;height:23px;background:#0b0b0b;"></div>
<div class="r" style="left:47px;top:300px;width:2815px;height:1px;background:#050505;"></div>
<svg class="r" style="left:27px;top:282px;" width="18" height="16" viewBox="0 0 18 16"><path d="M17 0 V16 H1 Z" fill="#6e6e6e"/></svg>
<div class="r" style="left:47px;top:278px;width:26px;height:22px;background:#6a6a6a;"></div>
<div class="r" style="left:47px;top:300px;width:26px;height:2px;background:#1e7a3e;"></div>
<div class="t" style="left:53.70px;top:281.22px;font-size:18.90px;font-weight:400;color:#ffffff;">A</div>
<div class="r" style="left:72px;top:278px;width:1px;height:22px;background:#bdbdbd;"></div>
<div class="t" style="left:114.42px;top:281.22px;font-size:18.90px;font-weight:400;color:#ececec;">B</div>
<div class="r" style="left:168px;top:278px;width:1px;height:22px;background:#7a7a7a;"></div>
<div class="t" style="left:210.06px;top:281.22px;font-size:18.90px;font-weight:400;color:#ececec;">C</div>
<div class="r" style="left:264px;top:278px;width:1px;height:22px;background:#7a7a7a;"></div>
<div class="t" style="left:305.85px;top:281.22px;font-size:18.90px;font-weight:400;color:#ececec;">D</div>
<div class="r" style="left:360px;top:278px;width:1px;height:22px;background:#7a7a7a;"></div>
<div class="t" style="left:402.33px;top:281.22px;font-size:18.90px;font-weight:400;color:#ececec;">E</div>
<div class="r" style="left:456px;top:278px;width:1px;height:22px;background:#7a7a7a;"></div>
<div class="t" style="left:498.83px;top:281.22px;font-size:18.90px;font-weight:400;color:#ececec;">F</div>
<div class="r" style="left:552px;top:278px;width:1px;height:22px;background:#7a7a7a;"></div>
<div class="t" style="left:623.88px;top:281.22px;font-size:18.90px;font-weight:400;color:#ececec;">G</div>
<div class="r" style="left:708px;top:278px;width:1px;height:22px;background:#7a7a7a;"></div>
<div class="t" style="left:780.17px;top:281.22px;font-size:18.90px;font-weight:400;color:#ececec;">H</div>
<div class="r" style="left:864px;top:278px;width:1px;height:22px;background:#7a7a7a;"></div>
<div class="t" style="left:940.38px;top:281.22px;font-size:18.90px;font-weight:400;color:#ececec;">I</div>
<div class="r" style="left:1020px;top:278px;width:1px;height:22px;background:#7a7a7a;"></div>
<div class="t" style="left:1094.83px;top:281.22px;font-size:18.90px;font-weight:400;color:#ececec;">J</div>
<div class="r" style="left:1176px;top:278px;width:1px;height:22px;background:#7a7a7a;"></div>
<div class="t" style="left:1248.03px;top:281.22px;font-size:18.90px;font-weight:400;color:#ececec;">K</div>
<div class="r" style="left:1332px;top:278px;width:1px;height:22px;background:#7a7a7a;"></div>
<div class="t" style="left:1405.28px;top:281.22px;font-size:18.90px;font-weight:400;color:#ececec;">L</div>
<div class="r" style="left:1488px;top:278px;width:1px;height:22px;background:#7a7a7a;"></div>
<div class="t" style="left:1559.13px;top:281.22px;font-size:18.90px;font-weight:400;color:#ececec;">M</div>
<div class="r" style="left:1644px;top:278px;width:1px;height:22px;background:#7a7a7a;"></div>
<div class="t" style="left:1716.17px;top:281.22px;font-size:18.90px;font-weight:400;color:#ececec;">N</div>
<div class="r" style="left:1800px;top:278px;width:1px;height:22px;background:#7a7a7a;"></div>
<div class="t" style="left:1807.66px;top:281.22px;font-size:18.90px;font-weight:400;color:#ececec;">O</div>
<div class="r" style="left:1828px;top:278px;width:1px;height:22px;background:#7a7a7a;"></div>
<div class="t" style="left:1868.42px;top:281.22px;font-size:18.90px;font-weight:400;color:#ececec;">P</div>
<div class="r" style="left:1920px;top:278px;width:1px;height:22px;background:#7a7a7a;"></div>
<div class="t" style="left:1975.66px;top:281.22px;font-size:18.90px;font-weight:400;color:#ececec;">Q</div>
<div class="r" style="left:2044px;top:278px;width:1px;height:22px;background:#7a7a7a;"></div>
<div class="t" style="left:2083.84px;top:281.22px;font-size:18.90px;font-weight:400;color:#ececec;">R</div>
<div class="r" style="left:2136px;top:278px;width:1px;height:22px;background:#7a7a7a;"></div>
<div class="t" style="left:2176.70px;top:281.22px;font-size:18.90px;font-weight:400;color:#ececec;">S</div>
<div class="r" style="left:2228px;top:278px;width:1px;height:22px;background:#7a7a7a;"></div>
<div class="t" style="left:2269.23px;top:281.22px;font-size:18.90px;font-weight:400;color:#ececec;">T</div>
<div class="r" style="left:2320px;top:278px;width:1px;height:22px;background:#7a7a7a;"></div>
<div class="t" style="left:2360.18px;top:281.22px;font-size:18.90px;font-weight:400;color:#ececec;">U</div>
<div class="r" style="left:2412px;top:278px;width:1px;height:22px;background:#7a7a7a;"></div>
<div class="t" style="left:2452.70px;top:281.22px;font-size:18.90px;font-weight:400;color:#ececec;">V</div>
<div class="r" style="left:2504px;top:278px;width:1px;height:22px;background:#7a7a7a;"></div>
<div class="t" style="left:2542.07px;top:281.22px;font-size:18.90px;font-weight:400;color:#ececec;">W</div>
<div class="r" style="left:2596px;top:278px;width:1px;height:22px;background:#7a7a7a;"></div>
<div class="t" style="left:2636.68px;top:281.22px;font-size:18.90px;font-weight:400;color:#ececec;">X</div>
<div class="r" style="left:2688px;top:278px;width:1px;height:22px;background:#7a7a7a;"></div>
<div class="t" style="left:2728.70px;top:281.22px;font-size:18.90px;font-weight:400;color:#ececec;">Y</div>
<div class="r" style="left:2780px;top:278px;width:1px;height:22px;background:#7a7a7a;"></div>
<div class="t" style="left:2821.22px;top:281.22px;font-size:18.90px;font-weight:400;color:#ececec;">Z</div>
<div class="r" style="left:72px;top:278px;width:1px;height:22px;background:#bdbdbd;"></div>
<div class="r" style="left:46px;top:278px;width:1px;height:22px;background:#bdbdbd;"></div>
<div class="r" style="left:11px;top:301px;width:36px;height:1369px;background:#0b0b0b;"></div>
<div class="r" style="left:11px;top:301px;width:36px;height:38px;background:#6a6a6a;"></div>
<div class="r" style="left:46px;top:301px;width:2px;height:38px;background:#1e7a3e;"></div>
<div class="r" style="left:11px;top:338px;width:36px;height:1px;background:#bdbdbd;"></div>
<div class="r" style="left:11px;top:301px;width:36px;height:37px;overflow:hidden">
<div class="t" style="left:12.57px;top:17.45px;font-size:18.62px;font-weight:400;color:#ffffff;">1</div>
</div>
<div class="r" style="left:11px;top:372px;width:36px;height:1px;background:#6e6e6e;"></div>
<div class="r" style="left:11px;top:339px;width:36px;height:33px;overflow:hidden">
<div class="t" style="left:12.82px;top:13.45px;font-size:18.62px;font-weight:400;color:#ececec;">2</div>
</div>
<div class="r" style="left:11px;top:407px;width:36px;height:1px;background:#6e6e6e;"></div>
<div class="r" style="left:11px;top:373px;width:36px;height:34px;overflow:hidden">
<div class="t" style="left:12.88px;top:14.45px;font-size:18.62px;font-weight:400;color:#ececec;">3</div>
</div>
<div class="r" style="left:11px;top:432px;width:36px;height:1px;background:#6e6e6e;"></div>
<div class="r" style="left:11px;top:408px;width:36px;height:24px;overflow:hidden">
<div class="t" style="left:12.88px;top:4.45px;font-size:18.62px;font-weight:400;color:#ececec;">4</div>
</div>
<div class="r" style="left:11px;top:462px;width:36px;height:1px;background:#6e6e6e;"></div>
<div class="r" style="left:11px;top:433px;width:36px;height:29px;overflow:hidden">
<div class="t" style="left:12.84px;top:9.45px;font-size:18.62px;font-weight:400;color:#ececec;">5</div>
</div>
<div class="r" style="left:11px;top:470px;width:36px;height:1px;background:#6e6e6e;"></div>
<div class="r" style="left:11px;top:463px;width:36px;height:7px;overflow:hidden">
<div class="t" style="left:12.76px;top:-12.55px;font-size:18.62px;font-weight:400;color:#ececec;">6</div>
</div>
<div class="r" style="left:11px;top:500px;width:36px;height:1px;background:#6e6e6e;"></div>
<div class="r" style="left:11px;top:471px;width:36px;height:29px;overflow:hidden">
<div class="t" style="left:12.81px;top:9.45px;font-size:18.62px;font-weight:400;color:#ececec;">7</div>
</div>
<div class="r" style="left:11px;top:526px;width:36px;height:1px;background:#6e6e6e;"></div>
<div class="r" style="left:11px;top:501px;width:36px;height:25px;overflow:hidden">
<div class="t" style="left:12.82px;top:5.45px;font-size:18.62px;font-weight:400;color:#ececec;">8</div>
</div>
<div class="r" style="left:11px;top:563px;width:36px;height:1px;background:#6e6e6e;"></div>
<div class="r" style="left:11px;top:527px;width:36px;height:36px;overflow:hidden">
<div class="t" style="left:12.83px;top:16.45px;font-size:18.62px;font-weight:400;color:#ececec;">9</div>
</div>
<div class="r" style="left:11px;top:600px;width:36px;height:1px;background:#6e6e6e;"></div>
<div class="r" style="left:11px;top:564px;width:36px;height:36px;overflow:hidden">
<div class="t" style="left:7.30px;top:16.45px;font-size:18.62px;font-weight:400;color:#ececec;">10</div>
</div>
<div class="r" style="left:11px;top:637px;width:36px;height:1px;background:#6e6e6e;"></div>
<div class="r" style="left:11px;top:601px;width:36px;height:36px;overflow:hidden">
<div class="t" style="left:7.39px;top:16.45px;font-size:18.62px;font-weight:400;color:#ececec;">11</div>
</div>
<div class="r" style="left:11px;top:674px;width:36px;height:1px;background:#6e6e6e;"></div>
<div class="r" style="left:11px;top:638px;width:36px;height:36px;overflow:hidden">
<div class="t" style="left:7.40px;top:16.45px;font-size:18.62px;font-weight:400;color:#ececec;">12</div>
</div>
<div class="r" style="left:11px;top:711px;width:36px;height:1px;background:#6e6e6e;"></div>
<div class="r" style="left:11px;top:675px;width:36px;height:36px;overflow:hidden">
<div class="t" style="left:7.34px;top:16.45px;font-size:18.62px;font-weight:400;color:#ececec;">13</div>
</div>
<div class="r" style="left:11px;top:748px;width:36px;height:1px;background:#6e6e6e;"></div>
<div class="r" style="left:11px;top:712px;width:36px;height:36px;overflow:hidden">
<div class="t" style="left:7.21px;top:16.45px;font-size:18.62px;font-weight:400;color:#ececec;">14</div>
</div>
<div class="r" style="left:11px;top:785px;width:36px;height:1px;background:#6e6e6e;"></div>
<div class="r" style="left:11px;top:749px;width:36px;height:36px;overflow:hidden">
<div class="t" style="left:7.32px;top:16.45px;font-size:18.62px;font-weight:400;color:#ececec;">15</div>
</div>
<div class="r" style="left:11px;top:822px;width:36px;height:1px;background:#6e6e6e;"></div>
<div class="r" style="left:11px;top:786px;width:36px;height:36px;overflow:hidden">
<div class="t" style="left:7.34px;top:16.45px;font-size:18.62px;font-weight:400;color:#ececec;">16</div>
</div>
<div class="r" style="left:11px;top:859px;width:36px;height:1px;background:#6e6e6e;"></div>
<div class="r" style="left:11px;top:823px;width:36px;height:36px;overflow:hidden">
<div class="t" style="left:7.40px;top:16.45px;font-size:18.62px;font-weight:400;color:#ececec;">17</div>
</div>
<div class="r" style="left:11px;top:896px;width:36px;height:1px;background:#6e6e6e;"></div>
<div class="r" style="left:11px;top:860px;width:36px;height:36px;overflow:hidden">
<div class="t" style="left:7.34px;top:16.45px;font-size:18.62px;font-weight:400;color:#ececec;">18</div>
</div>
<div class="r" style="left:11px;top:933px;width:36px;height:1px;background:#6e6e6e;"></div>
<div class="r" style="left:11px;top:897px;width:36px;height:36px;overflow:hidden">
<div class="t" style="left:7.37px;top:16.45px;font-size:18.62px;font-weight:400;color:#ececec;">19</div>
</div>
<div class="r" style="left:11px;top:970px;width:36px;height:1px;background:#6e6e6e;"></div>
<div class="r" style="left:11px;top:934px;width:36px;height:36px;overflow:hidden">
<div class="t" style="left:7.54px;top:16.45px;font-size:18.62px;font-weight:400;color:#ececec;">20</div>
</div>
<div class="r" style="left:11px;top:1007px;width:36px;height:1px;background:#6e6e6e;"></div>
<div class="r" style="left:11px;top:971px;width:36px;height:36px;overflow:hidden">
<div class="t" style="left:7.63px;top:16.45px;font-size:18.62px;font-weight:400;color:#ececec;">21</div>
</div>
<div class="r" style="left:11px;top:1044px;width:36px;height:1px;background:#6e6e6e;"></div>
<div class="r" style="left:11px;top:1008px;width:36px;height:36px;overflow:hidden">
<div class="t" style="left:7.64px;top:16.45px;font-size:18.62px;font-weight:400;color:#ececec;">22</div>
</div>
<div class="r" style="left:11px;top:1081px;width:36px;height:1px;background:#6e6e6e;"></div>
<div class="r" style="left:11px;top:1045px;width:36px;height:36px;overflow:hidden">
<div class="t" style="left:7.58px;top:16.45px;font-size:18.62px;font-weight:400;color:#ececec;">23</div>
</div>
<div class="r" style="left:11px;top:1118px;width:36px;height:1px;background:#6e6e6e;"></div>
<div class="r" style="left:11px;top:1082px;width:36px;height:36px;overflow:hidden">
<div class="t" style="left:7.45px;top:16.45px;font-size:18.62px;font-weight:400;color:#ececec;">24</div>
</div>
<div class="r" style="left:11px;top:1154px;width:36px;height:1px;background:#6e6e6e;"></div>
<div class="r" style="left:11px;top:1119px;width:36px;height:35px;overflow:hidden">
<div class="t" style="left:7.56px;top:15.45px;font-size:18.62px;font-weight:400;color:#ececec;">25</div>
</div>
<div class="r" style="left:11px;top:1157px;width:36px;height:1px;background:#6e6e6e;"></div>
<div class="r" style="left:11px;top:1161px;width:36px;height:1px;background:#6e6e6e;"></div>
<div class="r" style="left:11px;top:1194px;width:36px;height:1px;background:#6e6e6e;"></div>
<div class="r" style="left:11px;top:1162px;width:36px;height:32px;overflow:hidden">
<div class="t" style="left:7.58px;top:12.45px;font-size:18.62px;font-weight:400;color:#ececec;">28</div>
</div>
<div class="r" style="left:11px;top:1199px;width:36px;height:1px;background:#6e6e6e;"></div>
<div class="r" style="left:11px;top:1234px;width:36px;height:1px;background:#6e6e6e;"></div>
<div class="r" style="left:11px;top:1200px;width:36px;height:34px;overflow:hidden">
<div class="t" style="left:7.65px;top:14.45px;font-size:18.62px;font-weight:400;color:#ececec;">30</div>
</div>
<div class="r" style="left:11px;top:1269px;width:36px;height:1px;background:#6e6e6e;"></div>
<div class="r" style="left:11px;top:1235px;width:36px;height:34px;overflow:hidden">
<div class="t" style="left:7.74px;top:14.45px;font-size:18.62px;font-weight:400;color:#ececec;">31</div>
</div>
<div class="r" style="left:11px;top:1305px;width:36px;height:1px;background:#6e6e6e;"></div>
<div class="r" style="left:11px;top:1270px;width:36px;height:35px;overflow:hidden">
<div class="t" style="left:7.76px;top:15.45px;font-size:18.62px;font-weight:400;color:#ececec;">32</div>
</div>
<div class="r" style="left:11px;top:1340px;width:36px;height:1px;background:#6e6e6e;"></div>
<div class="r" style="left:11px;top:1306px;width:36px;height:34px;overflow:hidden">
<div class="t" style="left:7.70px;top:14.45px;font-size:18.62px;font-weight:400;color:#ececec;">33</div>
</div>
<div class="r" style="left:11px;top:1376px;width:36px;height:1px;background:#6e6e6e;"></div>
<div class="r" style="left:11px;top:1341px;width:36px;height:35px;overflow:hidden">
<div class="t" style="left:7.56px;top:15.45px;font-size:18.62px;font-weight:400;color:#ececec;">34</div>
</div>
<div class="r" style="left:11px;top:1406px;width:36px;height:1px;background:#6e6e6e;"></div>
<div class="r" style="left:11px;top:1377px;width:36px;height:29px;overflow:hidden">
<div class="t" style="left:7.68px;top:9.45px;font-size:18.62px;font-weight:400;color:#ececec;">35</div>
</div>
<div class="r" style="left:11px;top:1442px;width:36px;height:1px;background:#6e6e6e;"></div>
<div class="r" style="left:11px;top:1407px;width:36px;height:35px;overflow:hidden">
<div class="t" style="left:7.70px;top:15.45px;font-size:18.62px;font-weight:400;color:#ececec;">36</div>
</div>
<div class="r" style="left:11px;top:1447px;width:36px;height:1px;background:#6e6e6e;"></div>
<div class="r" style="left:11px;top:1483px;width:36px;height:1px;background:#6e6e6e;"></div>
<div class="r" style="left:11px;top:1448px;width:36px;height:35px;overflow:hidden">
<div class="t" style="left:7.69px;top:15.45px;font-size:18.62px;font-weight:400;color:#ececec;">38</div>
</div>
<div class="r" style="left:11px;top:1488px;width:36px;height:1px;background:#6e6e6e;"></div>
<div class="r" style="left:11px;top:1523px;width:36px;height:1px;background:#6e6e6e;"></div>
<div class="r" style="left:11px;top:1489px;width:36px;height:34px;overflow:hidden">
<div class="t" style="left:7.79px;top:14.45px;font-size:18.62px;font-weight:400;color:#ececec;">40</div>
</div>
<div class="r" style="left:11px;top:1558px;width:36px;height:1px;background:#6e6e6e;"></div>
<div class="r" style="left:11px;top:1524px;width:36px;height:34px;overflow:hidden">
<div class="t" style="left:7.88px;top:14.45px;font-size:18.62px;font-weight:400;color:#ececec;">41</div>
</div>
<div class="r" style="left:11px;top:1594px;width:36px;height:1px;background:#6e6e6e;"></div>
<div class="r" style="left:11px;top:1559px;width:36px;height:35px;overflow:hidden">
<div class="t" style="left:7.90px;top:15.45px;font-size:18.62px;font-weight:400;color:#ececec;">42</div>
</div>
<div class="r" style="left:11px;top:1623px;width:36px;height:1px;background:#6e6e6e;"></div>
<div class="r" style="left:11px;top:1595px;width:36px;height:28px;overflow:hidden">
<div class="t" style="left:7.84px;top:8.45px;font-size:18.62px;font-weight:400;color:#ececec;">43</div>
</div>
<div class="r" style="left:11px;top:1648px;width:36px;height:1px;background:#6e6e6e;"></div>
<div class="r" style="left:11px;top:1624px;width:36px;height:24px;overflow:hidden">
<div class="t" style="left:7.70px;top:4.45px;font-size:18.62px;font-weight:400;color:#ececec;">44</div>
</div>
<div class="r" style="left:11px;top:1649px;width:36px;height:20px;overflow:hidden">
<div class="t" style="left:7.82px;top:6.45px;font-size:18.62px;font-weight:400;color:#ececec;">45</div>
</div>
<div class="r" style="left:11px;top:300px;width:36px;height:1px;background:#bdbdbd;"></div>
<div class="r" style="left:47px;top:433px;width:2815px;height:1px;background:#a0a0a0;"></div>
<div class="t" style="left:77.07px;top:302.86px;font-size:36.34px;font-weight:700;color:#222;-webkit-text-stroke:1.02px #222;">Returns on Invested Capital</div>
<div class="t" style="left:77.25px;top:342.58px;font-size:28.05px;font-weight:700;color:#000;transform:scaleX(1.0766);-webkit-text-stroke:0.79px #000;">ABC Company Inc.</div>
<div class="t" style="left:75.17px;top:380.79px;font-size:19.77px;font-weight:700;color:#3b7ee9;transform:scaleX(1.0189);-webkit-text-stroke:0.55px #3b7ee9;">Go to Table of Contents</div>
<div class="r" style="left:76px;top:399px;width:227px;height:2px;background:#3b7ee9;"></div>
<div class="r" style="left:72px;top:434px;width:481px;height:29px;background:#4b4fd3;"></div>
<div class="r" style="left:72px;top:471px;width:481px;height:30px;background:#4ab3e6;"></div>
<div class="r" style="left:709px;top:434px;width:468px;height:29px;background:#4b4fd3;"></div>
<div class="r" style="left:709px;top:471px;width:468px;height:30px;background:#4ab3e6;"></div>
<div class="r" style="left:1333px;top:434px;width:468px;height:29px;background:#4b4fd3;"></div>
<div class="r" style="left:1333px;top:471px;width:468px;height:30px;background:#4ab3e6;"></div>
<div class="t" style="left:211.18px;top:436.73px;font-size:25.00px;font-weight:700;color:#fff;transform:scaleX(0.9900);-webkit-text-stroke:0.70px #fff;">Years to payback</div>
<div class="t" style="left:293.78px;top:474.94px;font-size:23.78px;font-weight:700;color:#fff;transform:scaleX(1.1488);-webkit-text-stroke:0.67px #fff;">1.1</div>
<div class="t" style="left:754.41px;top:436.82px;font-size:25.00px;font-weight:700;color:#fff;transform:scaleX(1.0266);-webkit-text-stroke:0.70px #fff;">5-Year Cash Generated ($&#x27;000)</div>
<div class="t" style="left:903.59px;top:474.74px;font-size:23.78px;font-weight:700;color:#fff;transform:scaleX(1.1390);-webkit-text-stroke:0.67px #fff;">4,853</div>
<div class="t" style="left:1492.53px;top:436.82px;font-size:25.00px;font-weight:700;color:#fff;transform:scaleX(1.0571);-webkit-text-stroke:0.70px #fff;">ROIC - 2030</div>
<div class="t" style="left:1526.64px;top:474.74px;font-size:23.78px;font-weight:700;color:#fff;transform:scaleX(1.2028);-webkit-text-stroke:0.67px #fff;">38.3%</div>
<div class="r" style="left:72px;top:527px;width:1729px;height:37px;background:#4b4fd3;"></div>
<div class="t" style="left:624.19px;top:531.58px;font-size:30.09px;font-weight:700;color:#fff;transform:scaleX(1.0483);-webkit-text-stroke:0.84px #fff;">Returns on Invested Capital Chart ($&#x27;000)</div>
<div class="r" style="left:278px;top:596px;width:46px;height:13px;background:#4ab3e6;"></div>
<div class="t" style="left:328.71px;top:587.30px;font-size:27.91px;font-weight:700;color:#000;transform:scaleX(0.9261);-webkit-text-stroke:0.78px #000;">Total Invested Capital</div>
<div class="r" style="left:775px;top:596px;width:46px;height:13px;background:#ef7a6f;"></div>
<div class="t" style="left:824.28px;top:587.30px;font-size:27.91px;font-weight:700;color:#000;transform:scaleX(0.9211);-webkit-text-stroke:0.78px #000;">Net Operating Profit After Tax (NOPAT)</div>
<svg class="r" style="left:1478px;top:594px;" width="52" height="16" viewBox="0 0 52 16"><path d="M1 8 H51" stroke="#2db5a6" stroke-width="4.5"/><circle cx="24" cy="8" r="7" fill="#2db5a6"/></svg>
<div class="t" style="left:1530.23px;top:587.30px;font-size:27.91px;font-weight:700;color:#000;transform:scaleX(0.9458);-webkit-text-stroke:0.78px #000;">ROIC</div>
<div class="r" style="left:211px;top:966px;width:1589px;height:1px;background:#5ea8d3;"></div>
<div class="t" style="left:133.67px;top:956.45px;font-size:20.06px;font-weight:700;color:#000;transform:scaleX(1.0802);-webkit-text-stroke:0.56px #000;">1,000</div>
<div class="r" style="left:211px;top:915px;width:1589px;height:1px;background:#5ea8d3;"></div>
<div class="t" style="left:133.67px;top:906.15px;font-size:20.06px;font-weight:700;color:#000;transform:scaleX(1.0802);-webkit-text-stroke:0.56px #000;">2,000</div>
<div class="r" style="left:211px;top:865px;width:1589px;height:1px;background:#5ea8d3;"></div>
<div class="t" style="left:133.67px;top:855.85px;font-size:20.06px;font-weight:700;color:#000;transform:scaleX(1.0802);-webkit-text-stroke:0.56px #000;">3,000</div>
<div class="r" style="left:211px;top:815px;width:1589px;height:1px;background:#5ea8d3;"></div>
<div class="t" style="left:133.67px;top:805.55px;font-size:20.06px;font-weight:700;color:#000;transform:scaleX(1.0802);-webkit-text-stroke:0.56px #000;">4,000</div>
<div class="r" style="left:211px;top:764px;width:1589px;height:1px;background:#5ea8d3;"></div>
<div class="t" style="left:133.67px;top:755.25px;font-size:20.06px;font-weight:700;color:#000;transform:scaleX(1.0802);-webkit-text-stroke:0.56px #000;">5,000</div>
<div class="r" style="left:211px;top:714px;width:1589px;height:1px;background:#5ea8d3;"></div>
<div class="t" style="left:133.67px;top:704.95px;font-size:20.06px;font-weight:700;color:#000;transform:scaleX(1.0802);-webkit-text-stroke:0.56px #000;">6,000</div>
<div class="r" style="left:211px;top:664px;width:1589px;height:1px;background:#5ea8d3;"></div>
<div class="t" style="left:133.67px;top:654.65px;font-size:20.06px;font-weight:700;color:#000;transform:scaleX(1.0802);-webkit-text-stroke:0.56px #000;">7,000</div>
<div class="r" style="left:181px;top:1017px;width:7px;height:3px;background:#000;"></div>
<div class="r" style="left:248px;top:958px;width:122px;height:59px;background:#4ab3e6;"></div>
<div class="r" style="left:370px;top:1007px;width:122px;height:10px;background:#ef7a6f;"></div>
<div class="r" style="left:566px;top:932px;width:122px;height:85px;background:#4ab3e6;"></div>
<div class="r" style="left:688px;top:987px;width:122px;height:30px;background:#ef7a6f;"></div>
<div class="r" style="left:883px;top:885px;width:122px;height:132px;background:#4ab3e6;"></div>
<div class="r" style="left:1005px;top:967px;width:122px;height:50px;background:#ef7a6f;"></div>
<div class="r" style="left:1201px;top:817px;width:122px;height:200px;background:#4ab3e6;"></div>
<div class="r" style="left:1323px;top:945px;width:122px;height:72px;background:#ef7a6f;"></div>
<div class="r" style="left:1519px;top:725px;width:122px;height:292px;background:#4ab3e6;"></div>
<div class="r" style="left:1641px;top:922px;width:122px;height:95px;background:#ef7a6f;"></div>
<div class="r" style="left:211px;top:1016px;width:1589px;height:2px;background:#5ea8d3;"></div>
<div class="r" style="left:210px;top:1016px;width:2px;height:7px;background:#5ea8d3;"></div>
<div class="r" style="left:528px;top:1016px;width:2px;height:7px;background:#5ea8d3;"></div>
<div class="r" style="left:846px;top:1016px;width:2px;height:7px;background:#5ea8d3;"></div>
<div class="r" style="left:1163px;top:1016px;width:2px;height:7px;background:#5ea8d3;"></div>
<div class="r" style="left:1481px;top:1016px;width:2px;height:7px;background:#5ea8d3;"></div>
<div class="r" style="left:1798px;top:1016px;width:2px;height:7px;background:#5ea8d3;"></div>
<svg class="r" style="left:0px;top:0px;pointer-events:none" width="2902" height="1762" viewBox="0 0 2902 1762"><path d="M370.2 897.6 L687.8 728.4 L1005.4 693.1 L1323.0 713.6 L1640.6 746.0" stroke="#2db5a6" stroke-width="4.6" fill="none" stroke-linejoin="round"/><circle cx="370.2" cy="897.6" r="39.5" fill="#2db5a6"/><circle cx="687.8" cy="728.4" r="39.5" fill="#2db5a6"/><circle cx="1005.4" cy="693.1" r="39.5" fill="#2db5a6"/><circle cx="1323.0" cy="713.6" r="39.5" fill="#2db5a6"/><circle cx="1640.6" cy="746.0" r="39.5" fill="#2db5a6"/></svg>
<div class="t" style="left:337.15px;top:889.11px;font-size:20.06px;font-weight:700;color:#fff;transform:scaleX(1.1474);-webkit-text-stroke:0.56px #fff;">16.8%</div>
<div class="t" style="left:655.30px;top:719.91px;font-size:20.06px;font-weight:700;color:#fff;transform:scaleX(1.1474);-webkit-text-stroke:0.56px #fff;">40.8%</div>
<div class="t" style="left:972.90px;top:684.66px;font-size:20.06px;font-weight:700;color:#fff;transform:scaleX(1.1474);-webkit-text-stroke:0.56px #fff;">45.8%</div>
<div class="t" style="left:1290.50px;top:705.11px;font-size:20.06px;font-weight:700;color:#fff;transform:scaleX(1.1474);-webkit-text-stroke:0.56px #fff;">42.9%</div>
<div class="t" style="left:1608.01px;top:737.54px;font-size:20.06px;font-weight:700;color:#fff;transform:scaleX(1.1474);-webkit-text-stroke:0.56px #fff;">38.3%</div>
<div class="t" style="left:347.10px;top:1069.86px;font-size:22.92px;font-weight:700;color:#000;transform:scaleX(0.9459);-webkit-text-stroke:0.64px #000;">2026</div>
<div class="t" style="left:664.78px;top:1069.86px;font-size:22.92px;font-weight:700;color:#000;transform:scaleX(0.9459);-webkit-text-stroke:0.64px #000;">2027</div>
<div class="t" style="left:982.24px;top:1069.86px;font-size:22.92px;font-weight:700;color:#000;transform:scaleX(0.9459);-webkit-text-stroke:0.64px #000;">2028</div>
<div class="t" style="left:1299.91px;top:1069.86px;font-size:22.92px;font-weight:700;color:#000;transform:scaleX(0.9459);-webkit-text-stroke:0.64px #000;">2029</div>
<div class="t" style="left:1617.55px;top:1069.86px;font-size:22.92px;font-weight:700;color:#000;transform:scaleX(0.9459);-webkit-text-stroke:0.64px #000;">2030</div>
<div class="r" style="left:72px;top:1118px;width:1729px;height:37px;background:#4b4fd3;"></div>
<div class="t" style="left:668.78px;top:1122.62px;font-size:29.80px;font-weight:700;color:#fff;transform:scaleX(1.0637);-webkit-text-stroke:0.83px #fff;">Returns on Invested Capital ($&#x27;000)</div>
<div class="r" style="left:73px;top:1160px;width:1727px;height:35px;background:#6d73e8;"></div>
<div class="r" style="left:1020px;top:1160px;width:1px;height:35px;background:#ffffff;"></div>
<div class="r" style="left:1176px;top:1160px;width:1px;height:35px;background:#ffffff;"></div>
<div class="r" style="left:1332px;top:1160px;width:1px;height:35px;background:#ffffff;"></div>
<div class="r" style="left:1488px;top:1160px;width:1px;height:35px;background:#ffffff;"></div>
<div class="r" style="left:1644px;top:1160px;width:1px;height:35px;background:#ffffff;"></div>
<div class="t" style="left:84.59px;top:1168.29px;font-size:19.77px;font-weight:700;color:#fff;transform:scaleX(0.9905);-webkit-text-stroke:0.55px #fff;">Fiscal Year</div>
<div class="t" style="left:1074.90px;top:1168.53px;font-size:19.48px;font-weight:700;color:#fff;transform:scaleX(1.1128);-webkit-text-stroke:0.55px #fff;">2026</div>
<div class="t" style="left:1230.98px;top:1168.53px;font-size:19.48px;font-weight:700;color:#fff;transform:scaleX(1.1128);-webkit-text-stroke:0.55px #fff;">2027</div>
<div class="t" style="left:1386.84px;top:1168.53px;font-size:19.48px;font-weight:700;color:#fff;transform:scaleX(1.1128);-webkit-text-stroke:0.55px #fff;">2028</div>
<div class="t" style="left:1542.91px;top:1168.53px;font-size:19.48px;font-weight:700;color:#fff;transform:scaleX(1.1128);-webkit-text-stroke:0.55px #fff;">2029</div>
<div class="t" style="left:1698.95px;top:1168.53px;font-size:19.48px;font-weight:700;color:#fff;transform:scaleX(1.1128);-webkit-text-stroke:0.55px #fff;">2030</div>
<div class="t" style="left:93.67px;top:1208.58px;font-size:19.19px;font-weight:400;color:#111;transform:scaleX(0.9738);">Debts</div>
<div class="t" style="left:1135.49px;top:1209.45px;font-size:18.62px;font-weight:400;color:#111;transform:scaleX(0.9755);">283</div>
<div class="t" style="left:1291.60px;top:1209.45px;font-size:18.62px;font-weight:400;color:#111;transform:scaleX(0.9755);">237</div>
<div class="t" style="left:1447.40px;top:1209.45px;font-size:18.62px;font-weight:400;color:#111;transform:scaleX(0.9755);">190</div>
<div class="t" style="left:1603.57px;top:1209.45px;font-size:18.62px;font-weight:400;color:#111;transform:scaleX(0.9755);">141</div>
<div class="t" style="left:1769.50px;top:1209.45px;font-size:18.62px;font-weight:400;color:#111;transform:scaleX(0.9755);">90</div>
<div class="t" style="left:93.67px;top:1243.58px;font-size:19.19px;font-weight:400;color:#111;transform:scaleX(0.9708);">Equity</div>
<div class="t" style="left:1135.57px;top:1244.25px;font-size:18.62px;font-weight:400;color:#111;transform:scaleX(0.9755);">881</div>
<div class="t" style="left:1276.42px;top:1244.25px;font-size:18.62px;font-weight:400;color:#111;transform:scaleX(0.9755);">1,451</div>
<div class="t" style="left:1432.45px;top:1244.25px;font-size:18.62px;font-weight:400;color:#111;transform:scaleX(0.9755);">2,427</div>
<div class="t" style="left:1588.07px;top:1244.25px;font-size:18.62px;font-weight:400;color:#111;transform:scaleX(0.9755);">3,834</div>
<div class="t" style="left:1744.45px;top:1244.25px;font-size:18.62px;font-weight:400;color:#111;transform:scaleX(0.9755);">5,697</div>
<div class="r" style="left:72px;top:1270px;width:1729px;height:36px;background:#4ab3e6;"></div>
<div class="t" style="left:77.63px;top:1277.58px;font-size:23.26px;font-weight:700;color:#fff;transform:scaleX(1.0170);-webkit-text-stroke:0.65px #fff;">Total Invested Capital</div>
<div class="t" style="left:1109.43px;top:1278.90px;font-size:21.20px;font-weight:700;color:#fff;transform:scaleX(1.0287);-webkit-text-stroke:0.59px #fff;">1,165</div>
<div class="t" style="left:1265.49px;top:1278.90px;font-size:21.20px;font-weight:700;color:#fff;transform:scaleX(1.0287);-webkit-text-stroke:0.59px #fff;">1,688</div>
<div class="t" style="left:1421.78px;top:1278.90px;font-size:21.20px;font-weight:700;color:#fff;transform:scaleX(1.0287);-webkit-text-stroke:0.59px #fff;">2,617</div>
<div class="t" style="left:1577.43px;top:1278.90px;font-size:21.20px;font-weight:700;color:#fff;transform:scaleX(1.0287);-webkit-text-stroke:0.59px #fff;">3,975</div>
<div class="t" style="left:1733.78px;top:1278.90px;font-size:21.20px;font-weight:700;color:#fff;transform:scaleX(1.0287);-webkit-text-stroke:0.59px #fff;">5,787</div>
<div class="t" style="left:93.27px;top:1314.48px;font-size:19.19px;font-weight:400;color:#111;transform:scaleX(0.9753);">Net Operating Profit After Tax (NOPAT)</div>
<div class="t" style="left:1135.45px;top:1315.45px;font-size:18.62px;font-weight:400;color:#111;transform:scaleX(0.9755);">195</div>
<div class="t" style="left:1291.49px;top:1315.45px;font-size:18.62px;font-weight:400;color:#111;transform:scaleX(0.9755);">583</div>
<div class="t" style="left:1447.60px;top:1315.45px;font-size:18.62px;font-weight:400;color:#111;transform:scaleX(0.9755);">987</div>
<div class="t" style="left:1588.30px;top:1315.45px;font-size:18.62px;font-weight:400;color:#111;transform:scaleX(0.9755);">1,415</div>
<div class="t" style="left:1744.40px;top:1315.45px;font-size:18.62px;font-weight:400;color:#111;transform:scaleX(0.9755);">1,869</div>
<div class="r" style="left:72px;top:1341px;width:1729px;height:37px;background:#4ab3e6;"></div>
<div class="t" style="left:76.80px;top:1349.67px;font-size:21.95px;font-weight:700;color:#fff;transform:scaleX(1.0890);-webkit-text-stroke:0.61px #fff;">ROIC</div>
<div class="t" style="left:1107.04px;top:1349.97px;font-size:20.63px;font-weight:700;color:#fff;transform:scaleX(1.1262);-webkit-text-stroke:0.58px #fff;">16.8%</div>
<div class="t" style="left:1263.04px;top:1349.97px;font-size:20.63px;font-weight:700;color:#fff;transform:scaleX(1.1262);-webkit-text-stroke:0.58px #fff;">40.8%</div>
<div class="t" style="left:1419.04px;top:1349.97px;font-size:20.63px;font-weight:700;color:#fff;transform:scaleX(1.1262);-webkit-text-stroke:0.58px #fff;">45.8%</div>
<div class="t" style="left:1575.04px;top:1349.97px;font-size:20.63px;font-weight:700;color:#fff;transform:scaleX(1.1262);-webkit-text-stroke:0.58px #fff;">42.9%</div>
<div class="t" style="left:1731.04px;top:1349.97px;font-size:20.63px;font-weight:700;color:#fff;transform:scaleX(1.1262);-webkit-text-stroke:0.58px #fff;">38.3%</div>
<div class="r" style="left:72px;top:1407px;width:1729px;height:37px;background:#4b4fd3;"></div>
<div class="t" style="left:696.84px;top:1411.52px;font-size:29.80px;font-weight:700;color:#fff;transform:scaleX(1.0335);-webkit-text-stroke:0.83px #fff;">Payback Period Analysis ($&#x27;000)</div>
<div class="r" style="left:73px;top:1449px;width:1727px;height:35px;background:#6d73e8;"></div>
<div class="r" style="left:1020px;top:1449px;width:1px;height:35px;background:#ffffff;"></div>
<div class="r" style="left:1176px;top:1449px;width:1px;height:35px;background:#ffffff;"></div>
<div class="r" style="left:1332px;top:1449px;width:1px;height:35px;background:#ffffff;"></div>
<div class="r" style="left:1488px;top:1449px;width:1px;height:35px;background:#ffffff;"></div>
<div class="r" style="left:1644px;top:1449px;width:1px;height:35px;background:#ffffff;"></div>
<div class="t" style="left:84.59px;top:1457.39px;font-size:19.77px;font-weight:700;color:#fff;transform:scaleX(0.9905);-webkit-text-stroke:0.55px #fff;">Fiscal Year</div>
<div class="t" style="left:1074.90px;top:1457.63px;font-size:19.48px;font-weight:700;color:#fff;transform:scaleX(1.1128);-webkit-text-stroke:0.55px #fff;">2026</div>
<div class="t" style="left:1230.98px;top:1457.63px;font-size:19.48px;font-weight:700;color:#fff;transform:scaleX(1.1128);-webkit-text-stroke:0.55px #fff;">2027</div>
<div class="t" style="left:1386.84px;top:1457.63px;font-size:19.48px;font-weight:700;color:#fff;transform:scaleX(1.1128);-webkit-text-stroke:0.55px #fff;">2028</div>
<div class="t" style="left:1542.91px;top:1457.63px;font-size:19.48px;font-weight:700;color:#fff;transform:scaleX(1.1128);-webkit-text-stroke:0.55px #fff;">2029</div>
<div class="t" style="left:1698.95px;top:1457.63px;font-size:19.48px;font-weight:700;color:#fff;transform:scaleX(1.1128);-webkit-text-stroke:0.55px #fff;">2030</div>
<div class="t" style="left:93.15px;top:1497.58px;font-size:19.19px;font-weight:400;color:#111;transform:scaleX(0.9873);">Net Profit After Tax</div>
<div class="t" style="left:1135.45px;top:1498.05px;font-size:18.62px;font-weight:400;color:#111;transform:scaleX(0.9755);">195</div>
<div class="t" style="left:1291.49px;top:1498.05px;font-size:18.62px;font-weight:400;color:#111;transform:scaleX(0.9755);">583</div>
<div class="t" style="left:1447.60px;top:1498.05px;font-size:18.62px;font-weight:400;color:#111;transform:scaleX(0.9755);">987</div>
<div class="t" style="left:1588.30px;top:1498.05px;font-size:18.62px;font-weight:400;color:#111;transform:scaleX(0.9755);">1,415</div>
<div class="t" style="left:1744.40px;top:1498.05px;font-size:18.62px;font-weight:400;color:#111;transform:scaleX(0.9755);">1,869</div>
<div class="t" style="left:93.89px;top:1532.58px;font-size:19.19px;font-weight:400;color:#111;transform:scaleX(0.8293);">CAPEX</div>
<div class="t" style="left:1131.31px;top:1533.45px;font-size:18.62px;font-weight:400;color:#111;transform:scaleX(0.9755);">(195)</div>
<div class="r" style="left:1316px;top:1541px;width:5px;height:2px;background:#111;"></div>
<div class="r" style="left:1472px;top:1541px;width:5px;height:2px;background:#111;"></div>
<div class="r" style="left:1628px;top:1541px;width:5px;height:2px;background:#111;"></div>
<div class="r" style="left:1784px;top:1541px;width:5px;height:2px;background:#111;"></div>
<div class="r" style="left:72px;top:1559px;width:1729px;height:36px;background:#4ab3e6;"></div>
<div class="t" style="left:76.65px;top:1566.58px;font-size:23.26px;font-weight:700;color:#fff;-webkit-text-stroke:0.65px #fff;">Cumulative Cash Generated (Spent)</div>
<div class="t" style="left:1152.16px;top:1567.10px;font-size:21.20px;font-weight:700;color:#fff;transform:scaleX(1.0287);-webkit-text-stroke:0.59px #fff;">0</div>
<div class="t" style="left:1283.80px;top:1567.10px;font-size:21.20px;font-weight:700;color:#fff;transform:scaleX(1.0287);-webkit-text-stroke:0.59px #fff;">583</div>
<div class="t" style="left:1421.63px;top:1567.10px;font-size:21.20px;font-weight:700;color:#fff;transform:scaleX(1.0287);-webkit-text-stroke:0.59px #fff;">1,569</div>
<div class="t" style="left:1576.94px;top:1567.10px;font-size:21.20px;font-weight:700;color:#fff;transform:scaleX(1.0287);-webkit-text-stroke:0.59px #fff;">2,984</div>
<div class="t" style="left:1733.61px;top:1567.10px;font-size:21.20px;font-weight:700;color:#fff;transform:scaleX(1.0287);-webkit-text-stroke:0.59px #fff;">4,853</div>
<div class="t" style="left:75.69px;top:1601.04px;font-size:19.48px;font-weight:700;color:#222;transform:scaleX(1.0054);-webkit-text-stroke:0.55px #222;">Payback year</div>
<div class="r" style="left:1021px;top:1596px;width:156px;height:29px;background:#2db5a6;"></div>
<div class="t" style="left:1092.19px;top:1600.93px;font-size:19.48px;font-weight:700;color:#222;transform:scaleX(1.1128);-webkit-text-stroke:0.55px #222;">1</div>
<div class="r" style="left:1251px;top:1609px;width:7px;height:3px;background:#222;"></div>
<div class="r" style="left:1407px;top:1609px;width:7px;height:3px;background:#222;"></div>
<div class="r" style="left:1563px;top:1609px;width:7px;height:3px;background:#222;"></div>
<div class="r" style="left:1719px;top:1609px;width:7px;height:3px;background:#222;"></div>
<div class="r" style="left:2860px;top:278px;width:31px;height:1392px;background:#0a0a0a;"></div>
<div class="r" style="left:2862px;top:279px;width:29px;height:1391px;border-radius:10px;background:#131313"></div>
<svg class="r" style="left:2868px;top:285px;" width="16" height="12" viewBox="0 0 16 12"><path d="M8 1.5 L14.5 10.5 H1.5 Z" fill="#9a9a9a" stroke="#9a9a9a" stroke-width="1.5" stroke-linejoin="round"/></svg>
<div class="r" style="left:2870px;top:304px;width:12px;height:1335px;border-radius:6px;background:#9a9a9a"></div>
<svg class="r" style="left:2868px;top:1653px;" width="16" height="12" viewBox="0 0 16 12"><path d="M8 10.5 L14.5 1.5 H1.5 Z" fill="#9a9a9a" stroke="#9a9a9a" stroke-width="1.5" stroke-linejoin="round"/></svg>
<div class="r" style="left:11px;top:1670px;width:2880px;height:48px;background:#0b0b0b;"></div>
<div class="r" style="left:11px;top:1719px;width:2880px;height:32px;background:#151515;"></div>
<div class="r" style="left:11px;top:1718px;width:2880px;height:1px;background:#2c2c2c;"></div>
<div class="r" style="left:1772px;top:1670px;width:92px;height:12px;background:#ffffff"></div>
<div class="r" style="left:1762px;top:1670px;width:20px;height:14px;background:#0b0b0b;border-top-right-radius:10px"></div>
<div class="r" style="left:1854px;top:1670px;width:20px;height:14px;background:#0b0b0b;border-top-left-radius:10px"></div>
<div class="r" style="left:1782px;top:1670px;width:72px;height:42px;border-radius:0 0 9px 9px;background:linear-gradient(#ffffff 0%,#f3f8fc 45%,#cfe6f6 100%)"></div>
<div class="t" style="left:1793.39px;top:1681.07px;font-size:19.91px;font-weight:400;color:#1a1a1a;transform:scaleX(0.9875);">ROIC</div>
<div class="r" style="left:1794px;top:1705px;width:48px;height:3px;background:#1e8a4c;"></div>
<svg class="r" style="left:44px;top:1685px;" width="14" height="18" viewBox="0 0 14 18"><path d="M10 2 L3 9 L10 16" stroke="#bdbdbd" stroke-width="1.6" fill="none"/></svg>
<svg class="r" style="left:92px;top:1685px;" width="14" height="18" viewBox="0 0 14 18"><path d="M4 2 L11 9 L4 16" stroke="#bdbdbd" stroke-width="1.6" fill="none"/></svg>
<div class="t" style="left:189.23px;top:1685.47px;font-size:20.64px;font-weight:400;color:#f2f2f2;transform:scaleX(1.0184);">Contents</div>
<div class="r" style="left:293px;top:1680px;width:1px;height:28px;background:#6a6a6a;"></div>
<div class="r" style="left:434px;top:1680px;width:1px;height:28px;background:#6a6a6a;"></div>
<div class="r" style="left:552px;top:1680px;width:1px;height:28px;background:#6a6a6a;"></div>
<div class="r" style="left:723px;top:1680px;width:1px;height:28px;background:#6a6a6a;"></div>
<div class="r" style="left:825px;top:1680px;width:1px;height:28px;background:#6a6a6a;"></div>
<div class="r" style="left:926px;top:1680px;width:1px;height:28px;background:#6a6a6a;"></div>
<div class="r" style="left:1052px;top:1680px;width:1px;height:28px;background:#6a6a6a;"></div>
<div class="r" style="left:1155px;top:1680px;width:1px;height:28px;background:#6a6a6a;"></div>
<div class="r" style="left:1210px;top:1680px;width:1px;height:28px;background:#6a6a6a;"></div>
<div class="r" style="left:1271px;top:1680px;width:1px;height:28px;background:#6a6a6a;"></div>
<div class="r" style="left:1332px;top:1680px;width:1px;height:28px;background:#6a6a6a;"></div>
<div class="r" style="left:1460px;top:1680px;width:1px;height:28px;background:#6a6a6a;"></div>
<div class="r" style="left:1587px;top:1680px;width:1px;height:28px;background:#6a6a6a;"></div>
<div class="r" style="left:1714px;top:1680px;width:1px;height:28px;background:#6a6a6a;"></div>
<div class="r" style="left:1776px;top:1680px;width:1px;height:28px;background:#6a6a6a;"></div>
<div class="r" style="left:1861px;top:1680px;width:1px;height:28px;background:#6a6a6a;"></div>
<div class="r" style="left:1958px;top:1680px;width:1px;height:28px;background:#6a6a6a;"></div>
<div class="r" style="left:2036px;top:1680px;width:1px;height:28px;background:#6a6a6a;"></div>
<div class="r" style="left:299px;top:1676px;width:128px;height:36px;border-radius:5px;background:#ffeb6f"></div>
<div class="t" style="left:311.77px;top:1685.47px;font-size:20.64px;font-weight:400;color:#1a1a1a;transform:scaleX(1.0210);">Dashboard</div>
<div class="r" style="left:440px;top:1676px;width:106px;height:36px;border-radius:5px;background:#ffeb6f"></div>
<div class="t" style="left:452.95px;top:1685.47px;font-size:20.64px;font-weight:400;color:#1a1a1a;transform:scaleX(0.9724);">Revenue</div>
<div class="r" style="left:559px;top:1676px;width:158px;height:36px;border-radius:5px;background:#ffeb6f"></div>
<div class="t" style="left:570.87px;top:1685.47px;font-size:20.64px;font-weight:400;color:#1a1a1a;transform:scaleX(0.9395);">COGS &amp; OPEX</div>
<div class="r" style="left:730px;top:1676px;width:89px;height:36px;border-radius:5px;background:#ffeb6f"></div>
<div class="t" style="left:742.57px;top:1685.47px;font-size:20.64px;font-weight:400;color:#1a1a1a;transform:scaleX(1.0231);">Payroll</div>
<div class="r" style="left:832px;top:1676px;width:87px;height:36px;border-radius:5px;background:#ffeb6f"></div>
<div class="t" style="left:844.05px;top:1685.47px;font-size:20.64px;font-weight:400;color:#1a1a1a;transform:scaleX(0.9052);">CAPEX</div>
<div class="r" style="left:932px;top:1676px;width:113px;height:36px;border-radius:5px;background:#ffeb6f"></div>
<div class="t" style="left:945.28px;top:1685.47px;font-size:20.64px;font-weight:400;color:#1a1a1a;transform:scaleX(0.9757);">CapTable</div>
<div class="r" style="left:1058px;top:1676px;width:90px;height:36px;border-radius:5px;background:#ffeb6f"></div>
<div class="t" style="left:1070.47px;top:1685.47px;font-size:20.64px;font-weight:400;color:#1a1a1a;transform:scaleX(1.0337);">Capital</div>
<div class="r" style="left:1161px;top:1676px;width:42px;height:36px;border-radius:5px;background:#4ab3e6"></div>
<div class="t" style="left:1172.42px;top:1685.47px;font-size:20.64px;font-weight:400;color:#1a1a1a;transform:scaleX(0.9851);">IS</div>
<div class="r" style="left:1216px;top:1676px;width:48px;height:36px;border-radius:5px;background:#4ab3e6"></div>
<div class="t" style="left:1227.68px;top:1685.47px;font-size:20.64px;font-weight:400;color:#1a1a1a;transform:scaleX(0.9244);">CF</div>
<div class="r" style="left:1277px;top:1676px;width:48px;height:36px;border-radius:5px;background:#4ab3e6"></div>
<div class="t" style="left:1288.61px;top:1685.47px;font-size:20.64px;font-weight:400;color:#1a1a1a;transform:scaleX(0.9119);">BS</div>
<div class="r" style="left:1338px;top:1676px;width:115px;height:36px;border-radius:5px;background:#4ab3e6"></div>
<div class="t" style="left:1351.59px;top:1685.47px;font-size:20.64px;font-weight:400;color:#1a1a1a;transform:scaleX(0.9656);">Scenarios</div>
<div class="r" style="left:1466px;top:1676px;width:115px;height:36px;border-radius:5px;background:#4ab3e6"></div>
<div class="t" style="left:1480.16px;top:1685.47px;font-size:20.64px;font-weight:400;color:#1a1a1a;transform:scaleX(1.0339);">Valuation</div>
<div class="r" style="left:1594px;top:1676px;width:114px;height:36px;border-radius:5px;background:#4ab3e6"></div>
<div class="t" style="left:1606.91px;top:1685.47px;font-size:20.64px;font-weight:400;color:#1a1a1a;">Summary</div>
<div class="r" style="left:1721px;top:1676px;width:48px;height:36px;border-radius:5px;background:#4ab3e6"></div>
<div class="t" style="left:1732.61px;top:1685.47px;font-size:20.64px;font-weight:400;color:#1a1a1a;transform:scaleX(0.9097);">BE</div>
<div class="r" style="left:1867px;top:1676px;width:85px;height:36px;border-radius:5px;background:#4ab3e6"></div>
<div class="t" style="left:1879.81px;top:1685.47px;font-size:20.64px;font-weight:400;color:#1a1a1a;transform:scaleX(0.9882);">Charts</div>
<div class="r" style="left:1965px;top:1676px;width:64px;height:36px;border-radius:5px;background:#4ab3e6"></div>
<div class="t" style="left:1977.53px;top:1685.47px;font-size:20.64px;font-weight:400;color:#1a1a1a;transform:scaleX(0.8968);">KPIs</div>
<div class="r" style="left:2043px;top:1676px;width:29px;height:36px;overflow:hidden;border-radius:5px 0 0 5px;background:#4ab3e6">
<div class="t" style="left:9.05px;top:9.47px;font-size:20.64px;font-weight:400;color:#1a1a1a;transform:scaleX(1.0138);">Sc</div>
</div>
<div class="r" style="left:2087.0px;top:1691px;width:4px;height:4px;border-radius:50%;background:#e0e0e0"></div>
<div class="r" style="left:2093.5px;top:1691px;width:4px;height:4px;border-radius:50%;background:#e0e0e0"></div>
<div class="r" style="left:2100.0px;top:1691px;width:4px;height:4px;border-radius:50%;background:#e0e0e0"></div>
<div class="r" style="left:2134px;top:1692px;width:18px;height:2px;background:#e6e6e6;"></div>
<div class="r" style="left:2142px;top:1684px;width:2px;height:18px;background:#e6e6e6;"></div>
<div class="r" style="left:2189px;top:1686.0px;width:4px;height:4px;border-radius:50%;background:#e0e0e0"></div>
<div class="r" style="left:2189px;top:1692.5px;width:4px;height:4px;border-radius:50%;background:#e0e0e0"></div>
<div class="r" style="left:2189px;top:1699.0px;width:4px;height:4px;border-radius:50%;background:#e0e0e0"></div>
<div class="r" style="left:2217px;top:1680px;width:642px;height:27px;border-radius:13px;background:#161616"></div>
<svg class="r" style="left:2222px;top:1686px;" width="12" height="14" viewBox="0 0 12 14"><path d="M10 1.5 V12.5 L2 7 Z" fill="#9a9a9a" stroke="#9a9a9a" stroke-linejoin="round"/></svg>
<div class="r" style="left:2242px;top:1687px;width:551px;height:12px;border-radius:6px;background:#9a9a9a"></div>
<svg class="r" style="left:2841px;top:1686px;" width="12" height="14" viewBox="0 0 12 14"><path d="M2 1.5 V12.5 L10 7 Z" fill="#9a9a9a" stroke="#9a9a9a" stroke-linejoin="round"/></svg>
<div class="t" style="left:26.17px;top:1727.03px;font-size:18.17px;font-weight:400;color:#e6e6e6;transform:scaleX(0.8236);">Ready</div>
<svg class="r" style="left:97px;top:1726px;" width="26" height="20" viewBox="0 0 26 20"><rect x="1.5" y="1.5" width="20" height="16" fill="none" stroke="#cfcfcf" stroke-width="1.4"/><path d="M1.5 5 H21.5 M4 8.5 H10 M4 12 H9" stroke="#cfcfcf" stroke-width="1.3"/><circle cx="16" cy="12" r="4.5" fill="#171717" stroke="#cfcfcf" stroke-width="1.4"/><circle cx="16" cy="12" r="2" fill="#cfcfcf"/></svg>
<svg class="r" style="left:145px;top:1722px;" width="24" height="26" viewBox="0 0 24 26"><circle cx="10.3" cy="5" r="2.6" fill="none" stroke="#eee" stroke-width="1.7"/><path d="M2 8.5 Q6 11.5 10.3 11 Q14.5 11.5 18.6 8.5 M10.3 11 L9.6 16.5 L5 22.5 M9.6 16.5 L13 19" stroke="#eee" stroke-width="1.9" fill="none" stroke-linecap="round" stroke-linejoin="round"/><path d="M13.3 15.5 L21.5 23.5 M21.5 15.5 L13.3 23.5" stroke="#eee" stroke-width="1.6"/></svg>
<div class="t" style="left:172.81px;top:1727.49px;font-size:16.42px;font-weight:700;color:#f0f0f0;transform:scaleX(0.9601);">Accessibility: Investigate</div>
<div class="r" style="left:2445px;top:1719px;width:60px;height:32px;background:#262626;"></div>
<svg class="r" style="left:2462px;top:1722px;" width="24" height="24" viewBox="0 0 24 24"><rect x="3" y="3" width="18.5" height="18.5" fill="none" stroke="#f4f4f4" stroke-width="2"/><path d="M9.2 3 V21.5 M15.3 3 V21.5 M3 9.2 H21.5 M3 15.3 H21.5" stroke="#f4f4f4" stroke-width="2"/></svg>
<svg class="r" style="left:2522px;top:1722px;" width="26" height="24" viewBox="0 0 26 24"><rect x="3.3" y="3" width="19.5" height="18.5" fill="none" stroke="#f4f4f4" stroke-width="2"/><rect x="7.8" y="6" width="10.6" height="12.4" fill="none" stroke="#f4f4f4" stroke-width="1.8"/><path d="M10.5 9.2 H16 M10.5 11.9 H16 M10.5 14.8 H16" stroke="#f4f4f4" stroke-width="1.5"/></svg>
<svg class="r" style="left:2582px;top:1722px;" width="26" height="24" viewBox="0 0 26 24"><rect x="3.2" y="3" width="20" height="18.5" fill="none" stroke="#f4f4f4" stroke-width="2"/><path d="M9.8 3 V14 M3.2 14 H15.2 V3" stroke="#f4f4f4" stroke-width="2" fill="none"/></svg>
<div class="r" style="left:2633px;top:1734px;width:12px;height:1px;background:#e6e6e6;"></div>
<div class="r" style="left:2653px;top:1734px;width:147px;height:2px;background:#9a9a9a;"></div>
<div class="r" style="left:2726px;top:1727px;width:9px;height:15px;border-radius:2px;background:#bdbdbd"></div>
<div class="r" style="left:2808px;top:1734px;width:13px;height:2px;background:#cfcfcf;"></div>
<div class="r" style="left:2814px;top:1728px;width:2px;height:14px;background:#cfcfcf;"></div>
<div class="t" style="left:2838.79px;top:1727.29px;font-size:17.62px;font-weight:400;color:#e6e6e6;transform:scaleX(0.9049);">120%</div>
</body></html>
